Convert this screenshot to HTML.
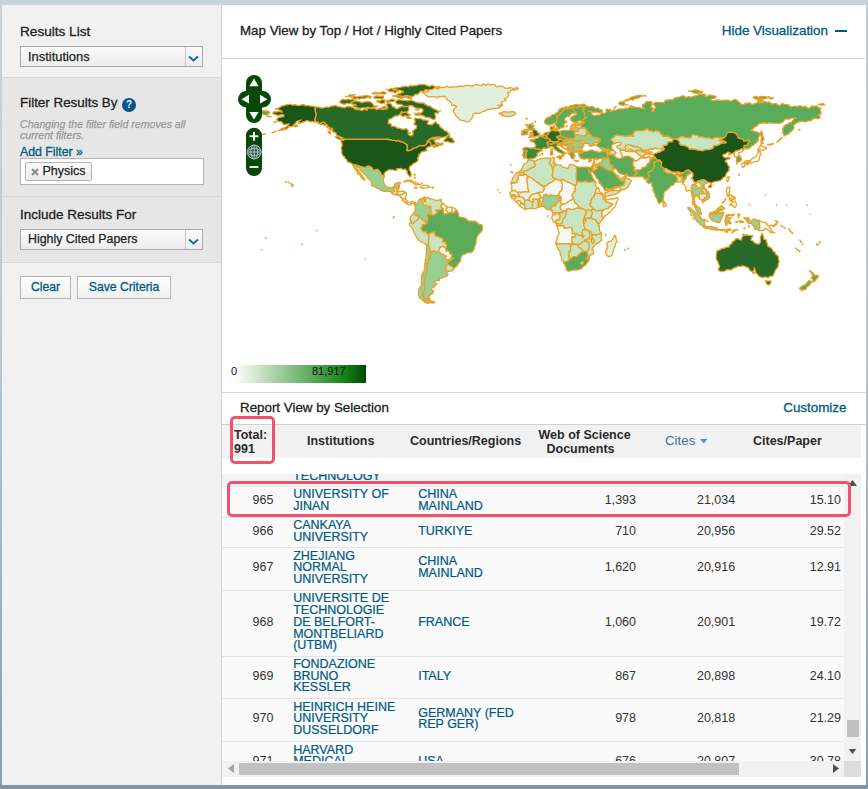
<!DOCTYPE html>
<html>
<head>
<meta charset="utf-8">
<title>Essential Science Indicators</title>
<style>
*{box-sizing:border-box;margin:0;padding:0}
html,body{width:868px;height:789px;overflow:hidden}
body{background:#c9d3da;font-family:"Liberation Sans",Arial,sans-serif;color:#222;position:relative;font-size:13px}
.abs{position:absolute}
#bottom{left:0;top:784.5px;width:868px;height:5px;background:#8194a3}
#side{left:2px;top:5px;width:219px;height:779.5px;background:#f1f1f1}
#sec2{left:2px;top:77px;width:219px;height:186px;background:#e6e6e6;border-top:1px solid #d6d6d6;border-bottom:1px solid #d6d6d6}
#sec2b{left:2px;top:196px;width:219px;height:1px;background:#d4d4d4}
.h{font-size:13.5px;color:#222;-webkit-text-stroke:0.3px #222;white-space:nowrap}
.sel{height:21px;border:1px solid #a9a9a9;background:linear-gradient(#fbfbfb,#ececec);font-size:12.9px;line-height:19px;padding-left:7px;color:#222;-webkit-text-stroke:0.25px #222;white-space:nowrap}
.sel i{position:absolute;right:0;top:0;width:17px;height:19px;border-left:1px solid #c4c4c4}
.btn{height:23px;border:1px solid #b5b5b5;background:linear-gradient(#fdfdfd,#f0f0f0);font-size:12.2px;line-height:21px;text-align:center;color:#005a84;-webkit-text-stroke:0.3px #005a84;white-space:nowrap}
#main{left:222px;top:5px;width:644px;height:779.5px;background:#fff}
.link{color:#005a84;-webkit-text-stroke:0.3px #005a84;font-size:12.3px;white-space:nowrap}
</style>
</head>
<body>
<div class="abs" id="bottom"></div>
<div class="abs" id="side"></div>
<div class="abs" id="sec2"></div>
<div class="abs" id="sec2b"></div>

<div class="abs h" style="left:20px;top:24.3px;font-size:13.6px">Results List</div>
<div class="abs sel" style="left:20px;top:46px;width:183px">Institutions<i></i>
<svg class="abs" style="right:3px;top:8px" width="11" height="8" viewBox="0 0 11 8"><path d="M1 1.5 L5.5 5.5 L10 1.5" fill="none" stroke="#1a6a96" stroke-width="2"/></svg></div>

<div class="abs h" style="left:20px;top:95.3px;font-size:13.4px">Filter Results By</div>
<div class="abs" style="left:122px;top:97.5px;width:14px;height:14px;border-radius:7px;background:#00558a;color:#fff;font-size:10px;font-weight:bold;text-align:center;line-height:14px">?</div>
<div class="abs" style="left:20px;top:119px;font-size:10.6px;line-height:11px;color:#999;-webkit-text-stroke:0.25px #999;font-style:italic;width:200px">Changing the filter field removes all<br>current filters.</div>
<div class="abs link" style="left:20px;top:144.5px">Add Filter »</div>
<div class="abs" style="left:20px;top:158px;width:184px;height:27px;background:#fff;border:1px solid #b3b3b3"></div>
<div class="abs" style="left:25px;top:162px;width:67px;height:19px;border:1px solid #b3b3b3;border-radius:2px;background:linear-gradient(#fafafa,#ebebeb);font-size:12.5px;line-height:17px;color:#222;-webkit-text-stroke:0.25px #222;padding-left:16.5px">Physics<svg class="abs" style="left:5px;top:5px" width="8" height="8" viewBox="0 0 8 8"><path d="M1 1l6 6M7 1l-6 6" stroke="#8a8a8a" stroke-width="2" fill="none"/></svg></div>

<div class="abs h" style="left:20px;top:207.3px">Include Results For</div>
<div class="abs sel" style="left:20px;top:229px;width:183px;font-size:12.4px">Highly Cited Papers<i></i>
<svg class="abs" style="right:3px;top:8px" width="11" height="8" viewBox="0 0 11 8"><path d="M1 1.5 L5.5 5.5 L10 1.5" fill="none" stroke="#1a6a96" stroke-width="2"/></svg></div>

<div class="abs btn" style="left:20px;top:276px;width:51px">Clear</div>
<div class="abs btn" style="left:77px;top:276px;width:94px">Save Criteria</div>

<div class="abs" id="main"></div>
<!--MAINSTART-->
<style>
#mainL{left:221px;top:5px;width:1px;height:780px;background:#d0d0d0}
#mainR{left:866px;top:0;width:2px;height:785px;background:linear-gradient(#c3cdd5,#b9c4cd 45%,#8a9cab)}
#edgeL{left:0;top:0;width:2px;height:785px;background:linear-gradient(#c9d3da,#bcc7d0 45%,#8a9cab)}
.hl{background:#d4d4d4;height:1px}
.bt{font-size:13.35px;color:#222;-webkit-text-stroke:0.3px #222;white-space:nowrap}
.th{font-size:12.5px;font-weight:bold;line-height:13.5px;color:#2a2a2a;white-space:nowrap;text-align:center}
#tb{left:222px;top:474px;width:622px;height:287px;overflow:hidden;background:#fff}
.r{position:absolute;left:0;width:622px;border-bottom:1px solid #e4e4e4;background:#fafafa}
.r.g{background:#fafafa}
.r span{position:absolute;font-size:12.5px;line-height:11.7px;white-space:nowrap}
.n{left:30.6px;color:#333}
.i,.c{color:#005a84;-webkit-text-stroke:0.22px #005a84}
.i{left:71.2px}.c{left:196.2px}
.d{color:#333;text-align:right}
.d1{right:208px}.d2{right:108.8px}.d3{right:3px}
.red{border:3px solid #f0516b;border-radius:5px}
</style>
<div class="abs" id="edgeL"></div><div class="abs" id="mainL"></div><div class="abs" id="mainR"></div>
<div class="abs bt" style="left:240px;top:23.2px">Map View by Top / Hot / Highly Cited Papers</div>
<div class="abs link" style="right:40px;top:23.2px;font-size:13.4px">Hide Visualization</div>
<div class="abs" style="left:835px;top:29.7px;width:12px;height:2.4px;background:#005a84"></div>
<div class="abs hl" style="left:222px;top:58px;width:643px"></div>
<!--MAPSTART--><svg class="abs" style="left:222px;top:58px" width="644" height="334" viewBox="0 0 644 334"><g stroke="#eda024" stroke-width="1.3" stroke-linejoin="round">
<path fill="#1b5618" d="M119.0,82.2 121.7,82.3 121.4,81.2 165.5,81.2 165.5,80.6 166.4,81.7 168.5,81.7 170.5,82.3 172.5,82.3 174.4,82.8 176.2,82.3 177.9,83.6 180.1,83.5 181.8,84.5 182.3,85.2 183.9,85.9 185.5,87.1 185.1,88.9 185.6,90.7 184.5,92.1 185.5,92.7 187.4,92.5 189.2,91.8 191.0,91.0 190.8,90.2 192.6,89.9 194.4,89.7 195.2,88.8 197.7,87.5 200.3,87.7 202.8,87.5 203.9,86.9 204.7,85.6 206.4,83.7 207.8,83.9 208.6,84.4 208.6,86.4 209.9,87.7 207.5,88.6 205.1,89.4 204.0,91.1 205.1,92.6 203.3,93.0 201.2,93.3 199.3,94.0 198.8,94.6 197.4,97.0 196.5,96.3 197.1,97.9 195.7,100.1 196.2,102.3 194.9,103.7 192.5,105.0 190.5,106.3 189.4,107.6 187.8,108.3 187.2,110.5 187.6,112.4 188.6,114.0 189.2,116.7 188.8,118.7 187.7,118.7 186.6,117.1 185.1,114.8 185.0,112.7 183.1,111.0 181.1,111.6 179.2,110.5 176.8,110.7 174.4,110.8 174.9,112.6 172.9,112.4 170.8,111.8 169.2,111.9 167.7,111.6 166.1,112.3 163.6,113.7 162.2,115.4 162.3,117.6 160.7,117.6 159.3,116.8 158.7,115.1 157.8,113.8 156.8,112.6 155.5,111.5 153.8,111.6 152.9,112.7 150.8,111.8 150.0,110.0 147.7,108.3 145.0,108.3 145.0,109.1 142.7,109.5 140.4,109.1 138.5,108.5 136.5,107.9 134.6,107.2 132.8,106.9 131.0,107.2 130.7,106.1 128.9,105.2 127.7,104.5 125.5,103.9 124.9,102.1 123.4,100.8 122.5,98.9 121.1,98.0 120.4,96.5 119.6,94.9 119.9,92.2 119.3,91.0 119.4,89.3 120.1,87.8 120.1,85.5 119.1,84.0ZM93.3,48.8 93.2,51.2 93.4,53.7 94.4,56.1 93.8,58.5 93.1,61.0 93.3,63.4 95.7,63.9 96.9,65.5 98.8,65.5 100.1,64.2 102.0,64.2 103.1,65.8 105.0,66.8 105.9,68.6 108.1,69.9 110.6,70.4 110.6,71.8 108.0,71.8 106.9,70.2 105.1,69.4 104.0,67.7 102.0,67.1 99.6,66.3 97.2,65.9 95.2,64.5 93.5,64.0 91.8,63.9 90.2,63.5 88.6,63.9 86.7,63.1 84.7,62.6 83.1,63.4 81.5,63.9 79.1,65.0 76.3,65.2 77.6,62.6 79.1,62.0 77.2,62.7 75.2,63.1 73.6,65.0 72.1,66.3 71.0,68.2 68.9,68.6 66.9,68.6 65.8,70.2 64.3,71.1 62.6,71.1 60.7,72.1 58.7,72.2 55.8,72.6 57.4,72.3 58.7,71.3 60.1,70.4 61.8,70.2 63.8,69.1 65.8,67.8 67.3,65.9 65.0,66.1 62.7,66.7 60.6,65.9 60.2,64.2 58.4,63.5 56.3,63.6 54.7,61.5 55.8,59.8 57.9,59.0 59.9,59.0 61.8,58.4 61.8,56.8 60.2,56.8 58.7,56.8 56.1,57.4 53.5,56.7 51.9,56.2 50.6,55.1 52.0,53.6 53.9,54.1 55.6,53.6 57.4,53.5 60.2,54.1 59.5,52.9 57.1,51.8 55.1,51.2 53.2,50.8 55.1,50.4 57.1,49.9 59.5,48.2 61.9,47.6 64.2,46.9 66.5,46.6 68.8,46.1 70.7,47.2 72.9,46.7 75.2,47.4 77.6,47.5 79.7,46.8 81.8,46.7 83.9,47.8 86.3,47.4 88.6,48.2 91.0,48.2ZM63.4,123.8 64.3,123.4 64.5,123.9ZM66.2,124.5 67.0,124.4 66.9,125.0ZM68.8,125.3 69.7,125.6 69.1,126.0ZM69.7,126.6 71.3,127.2 70.3,128.6 69.7,127.7ZM44.8,58.5 49.2,58.7 46.9,58.1ZM72.1,67.8 73.7,67.1 75.5,67.1 75.2,68.3 72.9,68.9ZM52.4,74.1 53.9,73.4 50.0,74.8ZM40.6,76.3 43.7,75.9 38.2,76.8ZM53.2,63.4 54.4,63.7 51.9,64.1Z"/>
<path fill="#286a28" d="M93.3,48.8 94.9,49.1 96.5,48.9 98.7,50.0 101.2,49.9 102.9,49.7 104.4,48.9 106.6,49.4 108.6,48.4 110.6,48.0 112.2,47.6 113.8,47.4 116.0,48.7 118.5,48.9 120.7,49.3 122.8,49.7 124.8,48.5 127.0,48.5 129.1,48.9 131.1,49.7 133.3,51.1 135.9,50.8 134.3,51.6 136.9,51.3 139.5,52.5 142.1,51.5 143.8,51.3 145.3,52.1 145.3,50.4 147.7,50.3 150.0,50.5 152.6,50.1 154.8,51.6 156.8,50.6 158.9,50.9 161.0,51.6 162.6,50.5 163.4,51.0 165.3,50.8 165.8,48.9 164.2,46.6 166.6,45.0 168.2,45.7 169.7,46.6 170.5,48.9 172.5,48.8 173.6,50.5 175.4,50.7 176.8,49.7 178.7,48.9 180.7,48.5 183.5,48.3 186.2,48.5 187.0,50.5 186.2,52.9 185.0,54.3 183.1,54.0 181.1,54.4 179.2,53.7 179.9,55.2 178.6,56.5 176.8,56.8 175.5,58.2 173.6,57.6 171.3,59.2 168.9,60.8 167.0,61.2 166.6,63.1 166.1,65.5 168.9,65.9 169.7,68.6 171.7,68.1 173.6,68.6 175.3,70.2 177.6,70.2 179.5,71.0 181.5,71.3 183.7,70.7 185.8,71.6 186.2,73.3 185.9,74.9 186.6,76.4 187.8,77.3 189.9,77.8 191.3,75.7 190.6,74.2 191.0,72.6 192.6,71.4 194.1,70.2 194.9,67.8 193.2,67.0 191.8,65.8 193.3,63.9 192.7,62.1 192.5,60.3 194.6,60.3 196.7,60.6 198.8,60.3 200.5,61.8 202.8,62.0 204.4,62.2 205.9,62.3 206.4,64.1 205.1,65.5 206.5,66.6 208.3,66.6 210.2,66.8 211.4,65.5 212.6,64.4 213.8,63.4 214.8,65.5 217.0,66.3 217.7,67.9 218.5,69.4 220.3,70.4 221.7,71.8 223.1,72.8 224.8,73.4 225.9,74.9 227.5,75.7 225.6,77.4 223.4,78.7 220.9,79.3 218.8,79.5 216.7,79.0 214.6,79.2 212.6,79.5 210.7,79.3 209.3,80.6 207.5,81.2 206.1,82.5 204.7,83.6 207.0,82.2 208.7,81.1 210.7,80.9 212.4,81.1 214.1,81.5 212.2,82.8 213.3,84.4 213.8,85.6 216.2,86.3 218.5,86.4 220.1,84.4 221.2,85.9 219.3,87.2 217.3,87.3 215.4,88.2 213.5,88.8 211.8,89.7 211.1,88.3 212.5,87.6 213.8,86.7 211.4,87.2 209.9,87.7 208.6,86.4 208.6,84.4 207.8,83.9 206.4,83.7 204.7,85.6 203.9,86.9 202.8,87.5 200.3,87.7 197.7,87.5 195.2,88.8 194.4,89.7 192.6,89.9 190.8,90.2 191.0,91.0 189.2,91.8 187.4,92.5 185.5,92.7 184.5,92.1 185.6,90.7 185.1,88.9 185.5,87.1 183.9,85.9 182.3,85.2 181.8,84.5 180.1,83.5 177.9,83.6 176.2,82.3 174.4,82.8 172.5,82.3 170.5,82.3 168.5,81.7 166.4,81.7 165.5,80.6 165.5,81.2 121.4,81.2 121.7,82.3 120.1,82.0 118.5,81.7 120.9,80.4 118.5,78.9 116.6,78.0 114.6,77.3 113.8,74.9 111.8,74.2 110.2,72.9 110.6,71.8 110.6,70.4 108.1,69.9 105.9,68.6 105.0,66.8 103.1,65.8 102.0,64.2 100.1,64.2 98.8,65.5 96.9,65.5 95.7,63.9 93.3,63.4 93.1,61.0 93.8,58.5 94.4,56.1 93.4,53.7 93.2,51.2 93.3,48.8ZM213.0,61.1 210.5,61.3 208.3,60.0 206.0,59.5 203.6,59.5 201.4,57.9 198.8,56.8 196.1,57.0 193.3,57.1 192.5,55.2 194.6,55.7 196.7,54.9 198.8,55.2 200.4,54.0 201.2,52.1 199.6,50.4 197.3,50.5 195.0,50.2 192.8,49.7 191.0,48.2 188.6,47.4 186.2,48.2 183.9,48.6 181.5,48.2 179.5,46.3 176.8,46.3 174.8,45.8 173.6,44.2 174.4,42.6 176.7,41.7 179.1,42.1 181.5,42.2 183.6,42.4 185.7,42.9 187.8,42.3 190.4,42.4 192.5,43.7 195.3,44.6 198.1,45.0 201.1,44.9 203.6,46.6 205.8,47.9 208.3,48.2 209.9,49.7 212.2,51.0 214.6,52.1 216.4,53.3 218.5,53.2 216.9,53.7 216.2,55.2 214.6,55.1 213.0,54.8 212.9,56.7 213.8,58.4ZM131.1,48.2 132.6,48.9 134.3,49.3 135.8,49.9 137.4,50.4 139.5,50.1 141.6,49.7 143.7,50.2 145.8,49.1 148.0,50.2 150.0,49.7 152.3,49.0 154.8,48.9 155.5,48.2 153.5,48.2 151.6,47.4 150.0,45.0 147.8,43.8 145.3,43.4 143.8,43.9 142.1,43.9 140.0,44.6 137.9,43.8 135.9,43.4 133.6,42.8 131.6,43.3 129.5,44.2 129.5,46.1 132.0,46.2 134.3,47.2 132.5,47.1ZM118.5,45.0 120.8,46.1 123.2,46.1 125.1,45.0 127.2,45.8 129.2,44.7 131.1,43.4 132.7,41.9 130.7,40.7 128.5,41.9 126.4,41.2 124.3,41.8 122.2,41.6 120.1,41.5 118.9,42.4 117.7,43.4ZM173.6,37.9 176.3,37.8 178.9,38.7 181.5,38.2 184.2,37.3 186.8,37.9 189.4,38.4 191.7,38.1 193.3,36.3 195.7,36.5 197.3,34.8 198.8,33.2 201.4,33.6 203.4,31.6 206.0,32.2 208.3,31.5 210.6,31.9 212.5,30.4 214.6,30.0 216.4,29.8 217.8,28.5 215.2,28.6 212.7,28.6 210.2,27.1 207.6,28.6 205.1,27.5 202.6,26.7 200.1,26.7 197.6,26.5 195.1,27.5 192.5,27.5 190.4,28.1 188.1,27.5 186.0,28.9 183.7,28.2 181.5,28.5 178.9,29.2 176.3,29.6 173.6,30.0 171.9,30.4 170.5,31.6 173.1,32.1 175.7,32.2 178.4,32.4 180.0,33.1 181.5,34.0 179.7,34.3 178.4,35.6 176.5,35.4 175.2,36.7ZM164.2,31.3 166.7,31.7 168.9,30.4 171.4,30.7 173.6,31.6 175.3,32.2 176.8,33.2 174.7,33.3 173.6,35.1 171.7,34.1 169.6,33.3 167.4,33.7 165.9,32.2ZM170.5,37.9 173.0,38.3 175.2,39.5 177.3,39.8 179.4,40.3 181.5,39.3 184.3,39.3 186.7,40.7 189.4,40.9 189.4,39.3 187.5,39.6 186.2,38.1 183.9,38.4 181.5,38.6 179.2,38.0 176.8,37.8 174.7,37.1 172.6,37.8ZM178.4,55.2 180.0,55.0 181.5,54.5 183.1,53.8 184.7,54.5 186.4,56.1 188.6,56.8 186.2,58.1 184.6,58.0 183.1,57.6 181.6,58.5 179.9,58.1 178.4,56.8ZM131.1,40.0 133.1,41.0 135.3,40.6 137.4,41.1 139.7,40.1 142.1,40.6 144.2,39.6 146.3,39.5 148.4,40.3 149.2,38.7 146.5,38.0 143.7,37.6 141.6,38.0 139.6,38.5 137.4,38.2 135.3,39.1 133.2,38.7 131.1,38.2ZM154.8,43.7 157.2,44.5 159.5,45.8 161.0,45.1 162.6,45.0 163.4,42.6 161.5,41.8 159.5,41.9 157.6,43.1 155.5,42.2ZM165.0,45.0 166.8,43.8 168.9,43.7 171.2,43.7 172.9,42.2 171.0,41.2 168.9,41.5 167.0,42.4 165.0,42.2ZM151.6,39.8 153.7,40.4 155.8,40.4 157.9,40.3 160.1,40.9 161.8,39.5 161.0,37.8 158.4,38.4 155.8,37.9 153.2,38.1ZM123.2,38.7 125.4,38.3 127.5,38.5 129.5,39.2 130.9,37.0 133.5,36.7 130.7,37.6 128.0,36.7 125.9,38.3ZM150.0,35.9 152.6,35.9 155.3,35.6 157.9,35.9 160.0,35.8 162.2,36.2 164.2,35.1 162.0,33.8 159.5,34.0 156.9,35.1 154.2,34.5 151.6,34.3ZM158.7,49.7 160.5,51.0 162.6,50.5 165.0,49.7 162.6,48.3 160.7,49.2ZM222.0,83.4 223.8,83.8 225.6,83.4 228.0,84.5 230.0,84.6 231.9,84.8 232.4,83.3 230.7,81.9 231.1,80.8 229.4,80.0 227.5,79.7 228.0,77.3 225.6,78.1 224.0,80.4 222.0,82.3ZM113.3,78.4 115.6,78.3 117.7,79.2 119.1,80.9 120.9,82.0 118.5,81.9 116.5,81.0 114.6,80.0ZM105.9,73.2 108.0,73.4 108.8,76.2 106.7,74.9ZM213.8,79.8 218.1,80.9 215.4,80.6ZM214.1,84.7 217.8,85.3 216.2,85.9ZM184.7,59.5 186.2,58.5 187.8,59.5 189.4,60.4 187.4,60.1 185.5,60.4ZM186.2,74.9 188.6,74.8 187.8,75.4ZM193.3,51.6 196.5,52.1 195.7,50.8Z"/>
<path fill="#e0f0dc" d="M200.4,34.8 202.2,33.4 204.7,34.1 206.5,32.8 208.3,31.6 210.7,31.3 212.8,29.7 215.6,31.1 217.8,29.6 220.1,29.3 222.5,29.3 224.8,28.2 227.2,29.5 229.6,29.0 231.9,28.9 234.3,28.8 236.6,28.5 238.9,28.0 241.2,28.6 243.4,27.3 245.6,27.3 247.9,27.6 250.2,28.3 252.4,27.0 254.6,26.3 256.9,27.1 259.2,27.6 261.4,25.9 263.7,27.4 265.9,26.1 268.1,26.9 270.3,26.7 272.5,26.6 274.3,28.5 276.4,28.7 278.7,27.9 280.8,28.5 282.6,29.8 284.7,30.3 287.0,30.0 289.4,29.7 291.7,31.3 294.2,29.6 296.5,30.4 294.7,31.6 292.7,32.0 290.6,32.1 288.6,32.4 287.7,34.4 285.5,34.8 286.6,36.2 286.3,37.9 284.8,39.9 282.3,40.3 283.9,42.6 281.6,43.5 279.2,44.2 279.5,46.0 280.8,47.4 278.4,47.4 276.0,47.7 277.8,46.9 279.2,48.3 277.1,50.0 274.4,50.5 272.4,51.0 270.2,50.4 268.1,51.3 265.5,51.2 263.4,52.9 260.9,53.5 258.7,54.8 256.0,55.4 253.2,55.2 251.2,56.2 250.8,58.4 249.9,60.2 248.5,61.5 246.9,63.9 244.5,63.6 242.2,62.9 239.8,62.3 237.7,61.8 236.6,60.0 234.7,58.8 233.5,56.8 232.4,55.1 231.1,53.7 231.9,51.3 233.1,49.5 235.1,48.9 232.6,47.2 229.6,47.4 229.6,45.0 228.3,43.9 227.2,42.6 224.9,41.8 224.0,39.5 222.1,38.1 219.9,38.6 217.8,38.4 215.2,39.6 212.5,38.6 209.9,38.7 207.5,39.2 205.5,38.2 203.6,37.1 202.4,35.4Z"/>
<path fill="#c7e5c1" d="M276.8,55.2 279.0,55.1 280.8,53.8 282.9,53.7 284.9,54.2 287.0,54.1 289.5,53.4 292.1,54.0 294.0,55.7 291.8,57.1 289.1,58.2 286.3,58.5 284.2,58.5 282.3,57.9 279.6,57.8 280.8,56.3 279.2,56.1 277.6,56.2Z"/>
<path fill="#98d094" d="M131.0,107.2 132.8,106.9 134.6,107.2 136.5,107.9 138.5,108.5 140.4,109.1 142.7,109.5 145.0,109.1 145.0,108.3 147.7,108.3 150.0,110.0 150.8,111.8 152.9,112.7 153.8,111.6 155.5,111.5 156.8,112.6 157.8,113.8 158.7,115.1 159.3,116.8 160.7,117.6 162.3,117.6 162.3,119.2 161.4,120.6 161.4,123.3 162.3,126.0 163.7,128.0 165.8,129.1 167.4,129.7 168.9,129.3 170.5,129.1 172.1,128.2 172.9,125.6 174.4,125.0 176.0,124.5 178.4,124.5 177.6,126.9 177.3,129.6 176.3,129.4 174.9,130.2 172.1,130.2 171.6,131.5 172.9,133.0 171.4,134.0 170.2,135.4 169.0,133.9 167.4,133.2 165.0,133.5 163.4,133.2 161.8,133.4 160.0,132.7 158.2,132.1 156.7,130.7 154.8,130.2 153.3,129.1 151.6,128.6 149.2,126.9 149.6,124.5 148.8,123.0 147.7,121.7 145.9,120.4 144.5,118.6 142.9,116.3 141.5,115.6 140.6,114.3 139.3,113.2 138.2,111.9 137.1,109.3 134.6,108.3 134.7,110.4 135.8,111.4 136.6,112.7 138.2,115.1 139.2,116.8 140.6,118.2 142.1,120.6 142.9,122.0 141.7,121.9 140.3,120.7 139.0,119.3 138.2,117.1 136.5,116.3 135.1,115.1 135.9,113.5 134.1,112.7 133.0,111.2 131.6,108.8Z"/>
<path fill="#e0f0dc" d="M170.2,135.4 171.4,134.0 172.9,133.0 171.6,131.5 172.1,130.2 174.9,130.2 174.8,131.8 174.9,133.4 176.3,133.7 174.9,134.9 174.6,135.7 173.5,136.7 171.4,136.5Z"/>
<path fill="#f4f8f2" d="M174.9,130.2 176.3,129.4 176.6,130.8 175.4,133.4 174.9,133.4 174.8,131.8Z"/>
<path fill="#e0f0dc" d="M174.9,134.9 176.3,133.7 177.6,133.5 179.9,133.2 182.3,133.5 184.4,134.8 181.8,135.1 180.4,136.5 178.8,136.7 177.9,137.9 177.1,137.3 176.0,136.5 174.6,135.7Z"/>
<path fill="#f4f8f2" d="M173.5,136.7 174.6,135.7 176.0,136.5 177.1,137.3 177.0,137.6 174.8,137.1Z"/>
<path fill="#f4f8f2" d="M177.9,137.9 178.8,136.7 180.4,136.5 181.8,135.1 184.4,134.8 184.3,136.4 183.9,137.9 183.4,139.5 183.6,141.1 182.0,140.9 180.4,140.9 179.1,139.5Z"/>
<path fill="#c7e5c1" d="M180.4,140.9 182.0,140.9 183.6,141.1 185.3,143.3 184.8,145.6 183.6,144.9 182.0,143.3 180.3,142.7Z"/>
<path fill="#e0f0dc" d="M184.8,145.6 185.3,143.3 187.8,144.5 190.2,143.3 191.9,144.0 193.5,144.7 192.7,147.1 191.9,145.2 189.4,145.3 188.8,146.9 186.7,146.6Z"/>
<path fill="#ffffff" d="M181.7,123.9 183.2,123.1 184.7,122.2 186.7,122.3 188.6,122.0 190.8,123.6 193.3,124.2 195.0,124.8 196.5,125.8 198.5,126.6 195.7,126.5 193.0,127.1 193.8,126.0 191.8,125.3 190.2,124.5 188.6,123.8 187.1,123.0 185.5,123.0 183.6,123.6Z"/>
<path fill="#ffffff" d="M198.2,129.4 199.0,128.0 200.4,127.1 202.5,127.2 205.3,127.4 207.7,129.1 205.1,129.6 202.8,130.5 201.2,129.7 199.7,129.8Z"/>
<path fill="#ffffff" d="M192.1,129.4 195.2,129.7 193.8,130.4Z"/>
<path fill="#ffffff" d="M209.6,129.3 211.9,129.4 210.7,130.1Z"/>
<path fill="#ffffff" d="M191.8,116.3 193.7,116.7 192.5,117.0ZM192.5,119.0 193.2,120.3 192.2,120.0ZM199.5,125.3 200.4,124.9 200.1,125.5Z"/>
<path fill="#ffffff" d="M218.1,141.5 219.5,141.4 219.0,142.5Z"/>
<path fill="#98d094" d="M193.5,144.7 194.4,145.8 195.7,144.8 196.3,143.4 197.3,141.4 198.8,140.8 201.5,139.7 203.1,138.9 203.1,139.8 203.1,139.8 201.2,140.9 200.4,143.4 201.2,145.8 202.0,147.1 204.8,147.4 205.9,148.8 207.5,148.2 209.1,148.6 208.6,151.3 209.4,153.0 208.6,154.0 209.9,156.5 209.9,156.5 207.6,156.5 205.5,155.7 206.4,156.8 205.1,157.5 205.1,158.7 206.1,160.1 205.6,162.6 205.3,165.0 205.3,165.0 204.0,164.4 202.5,163.0 200.6,162.3 198.8,160.0 196.8,158.6 196.8,158.6 195.2,157.8 193.3,157.3 191.3,156.2 191.3,156.2 191.6,154.5 193.3,152.4 193.3,149.7 193.5,147.7 192.7,147.1Z"/>
<path fill="#c7e5c1" d="M203.1,139.8 202.2,140.8 202.8,141.4 202.3,143.4 203.6,143.8 203.3,141.4 204.8,140.3 205.5,139.2 207.7,140.8 209.7,140.8 211.4,141.7 213.8,142.3 215.9,142.5 217.8,141.5 218.1,142.7 219.3,143.4 219.6,145.0 221.2,145.3 221.2,145.3 220.0,146.1 220.4,147.4 219.2,147.8 218.7,149.1 219.8,150.2 219.8,150.2 219.3,151.3 217.0,151.9 216.5,152.6 213.8,151.9 214.3,152.4 215.5,154.8 214.6,155.4 212.2,156.8 211.0,157.1 209.9,156.5 209.9,156.5 208.6,154.0 209.4,153.0 208.6,151.3 209.1,148.6 207.5,148.2 205.9,148.8 204.8,147.4 202.0,147.1 201.2,145.8 200.4,143.4 201.2,140.9 203.1,139.8Z"/>
<path fill="#f4f8f2" d="M221.2,145.3 223.3,147.4 225.3,149.1 225.3,149.1 224.5,150.5 224.0,152.1 225.2,153.2 226.4,155.4 226.4,155.4 224.0,156.0 222.5,156.4 221.2,154.8 221.5,152.9 221.2,151.5 220.9,150.5 219.8,150.2 219.8,150.2 218.7,149.1 219.2,147.8 220.4,147.4 220.0,146.1 221.2,145.3Z"/>
<path fill="#f4f8f2" d="M225.3,149.1 228.0,149.1 230.3,149.3 230.3,149.3 229.7,151.0 230.0,152.9 229.6,154.8 229.6,154.8 227.4,154.5 226.4,155.4 226.4,155.4 225.2,153.2 224.0,152.1 224.5,150.5 225.3,149.1Z"/>
<path fill="#f4f8f2" d="M230.3,149.3 232.7,150.5 234.0,151.8 234.0,151.8 233.1,153.4 232.1,154.9 229.6,154.8 229.6,154.8 230.0,152.9 229.7,151.0 230.3,149.3Z"/>
<path fill="#5aab5a" d="M234.0,151.8 235.1,152.4 235.5,154.2 236.6,155.6 236.6,158.4 239.0,159.5 240.6,159.3 242.6,160.1 244.5,160.9 245.6,162.7 247.8,163.2 250.0,163.0 251.6,163.4 253.2,163.1 254.9,164.4 256.7,165.8 258.1,166.5 259.8,166.7 260.3,168.2 260.6,169.7 260.0,172.6 258.6,174.2 257.1,175.7 256.0,177.3 254.8,178.9 254.6,180.5 254.0,182.0 254.2,184.3 253.7,186.4 252.9,188.1 252.4,189.9 251.9,191.6 250.8,193.1 249.2,194.6 247.3,194.7 245.3,194.9 243.7,195.5 242.2,196.4 240.5,197.1 239.3,198.6 238.9,200.1 238.7,201.7 238.2,203.6 236.8,204.8 235.9,206.4 234.8,208.2 233.0,209.3 231.3,211.5 231.3,211.5 231.3,209.9 229.6,208.3 227.2,207.1 224.7,206.0 224.7,206.0 226.1,204.3 227.7,202.8 228.9,201.5 230.7,201.1 230.8,199.7 229.4,198.6 229.4,198.6 229.9,196.2 227.8,195.9 227.2,193.5 225.8,192.9 224.2,193.2 223.5,191.8 223.7,190.2 223.7,190.2 224.0,189.6 224.8,186.8 223.6,185.6 223.4,184.1 220.6,184.1 220.8,182.0 220.1,180.1 217.8,179.7 216.1,178.4 214.0,178.1 212.6,176.8 212.6,173.8 210.4,174.6 208.3,175.3 205.8,175.6 205.8,175.6 204.2,175.7 204.2,173.4 201.7,174.2 200.4,172.9 199.6,171.5 198.8,170.1 200.1,168.6 200.7,166.4 203.2,166.2 205.3,165.0 205.3,165.0 205.6,162.6 206.1,160.1 205.1,158.7 205.1,157.5 206.4,156.8 205.5,155.7 207.6,156.5 209.9,156.5 209.9,156.5 211.0,157.1 212.2,156.8 214.6,155.4 215.5,154.8 214.3,152.4 213.8,151.9 216.5,152.6 217.0,151.9 219.3,151.3 219.8,150.2 219.8,150.2 220.9,150.5 221.2,151.5 221.5,152.9 221.2,154.8 222.5,156.4 224.0,156.0 226.4,155.4 226.4,155.4 227.4,154.5 229.6,154.8 229.6,154.8 232.1,154.9 233.1,153.4 234.0,151.8Z"/>
<path fill="#c7e5c1" d="M231.3,211.5 229.6,213.1 226.9,213.4 225.1,213.0 223.6,211.9 223.6,211.9 223.7,209.6 223.7,207.6 224.7,206.0 224.7,206.0 227.2,207.1 229.6,208.3 231.3,209.9 231.3,211.5Z"/>
<path fill="#98d094" d="M223.6,211.9 224.5,213.5 225.3,215.1 226.1,216.4 224.5,218.6 222.6,218.8 220.9,219.7 219.2,220.2 217.4,219.8 217.3,222.7 215.1,222.4 213.0,223.0 213.0,225.3 215.1,225.7 213.9,227.1 212.6,228.5 211.0,229.6 209.4,230.5 209.1,232.0 211.8,233.2 210.8,235.1 209.1,236.4 208.2,237.7 206.7,238.4 207.7,240.8 207.7,240.8 205.1,240.3 203.3,240.4 201.5,239.8 200.4,237.1 201.2,235.6 201.5,234.0 202.2,232.5 202.8,230.9 202.9,229.3 202.6,227.7 202.2,226.2 202.3,224.6 202.8,222.6 202.8,220.6 203.6,218.7 203.6,216.7 203.5,214.9 204.5,213.5 205.1,210.7 204.9,209.0 205.1,207.2 205.4,205.3 205.6,203.3 206.2,201.8 207.5,200.9 207.9,199.0 207.8,197.0 208.7,195.6 209.6,194.3 209.6,194.3 211.0,192.7 212.7,193.2 214.1,194.3 216.6,193.4 216.6,193.4 218.1,194.5 219.3,195.9 221.0,196.3 222.5,197.0 224.5,198.2 223.5,199.6 223.1,201.2 224.8,201.4 227.5,201.6 229.1,200.5 229.4,198.6 229.4,198.6 230.8,199.7 230.7,201.1 228.9,201.5 227.7,202.8 226.1,204.3 224.7,206.0 224.7,206.0 223.7,207.6 223.7,209.6 223.6,211.9ZM207.4,241.4 208.8,243.0 211.1,243.3 212.7,244.6 210.7,245.2 209.1,244.4 207.4,244.9 208.0,243.1Z"/>
<path fill="#98d094" d="M207.7,240.8 206.2,242.2 204.4,242.8 202.4,242.5 200.4,242.7 199.6,241.1 198.1,240.3 197.1,238.9 196.8,237.1 196.3,235.6 196.5,234.0 196.5,231.6 197.6,230.0 198.8,228.5 199.5,226.6 199.2,224.6 199.5,223.0 199.3,221.4 199.8,219.5 199.6,217.5 200.2,215.8 201.1,214.3 202.2,212.5 202.6,210.4 202.8,208.0 202.8,205.6 203.4,204.1 203.1,202.5 203.9,200.6 204.4,198.6 204.0,195.8 204.7,193.1 204.5,191.1 204.8,189.1 204.5,187.2 204.5,187.2 205.9,186.0 205.9,186.0 206.7,188.3 207.5,189.1 207.7,190.7 208.0,192.3 209.6,194.3 209.6,194.3 208.7,195.6 207.8,197.0 207.9,199.0 207.5,200.9 206.2,201.8 205.6,203.3 205.4,205.3 205.1,207.2 204.9,209.0 205.1,210.7 204.5,213.5 203.5,214.9 203.6,216.7 203.6,218.7 202.8,220.6 202.8,222.6 202.3,224.6 202.2,226.2 202.6,227.7 202.9,229.3 202.8,230.9 202.2,232.5 201.5,234.0 201.2,235.6 200.4,237.1 201.5,239.8 203.3,240.4 205.1,240.3 207.7,240.8ZM207.4,241.4 208.0,243.1 207.4,244.9 205.1,245.5 203.7,244.5 202.0,244.2 204.4,243.1 205.5,241.6Z"/>
<path fill="#c7e5c1" d="M205.8,175.6 207.2,178.1 206.6,179.6 206.7,181.2 206.3,182.5 206.7,184.4 205.9,186.0 205.9,186.0 206.7,188.3 207.5,189.1 207.7,190.7 208.0,192.3 209.6,194.3 209.6,194.3 211.0,192.7 212.7,193.2 214.1,194.3 216.6,193.4 216.6,193.4 217.3,190.8 218.2,189.3 220.2,188.7 222.3,188.8 223.7,190.2 223.7,190.2 224.0,189.6 224.8,186.8 223.6,185.6 223.4,184.1 220.6,184.1 220.8,182.0 220.1,180.1 217.8,179.7 216.1,178.4 214.0,178.1 212.6,176.8 212.6,173.8 210.4,174.6 208.3,175.3 205.8,175.6Z"/>
<path fill="#f4f8f2" d="M223.7,190.2 222.3,188.8 220.2,188.7 218.2,189.3 217.3,190.8 216.6,193.4 216.6,193.4 218.1,194.5 219.3,195.9 221.0,196.3 222.5,197.0 224.5,198.2 223.5,199.6 223.1,201.2 224.8,201.4 227.5,201.6 229.1,200.5 229.4,198.6 229.4,198.6 229.9,196.2 227.8,195.9 227.2,193.5 225.8,192.9 224.2,193.2 223.5,191.8 223.7,190.2Z"/>
<path fill="#c7e5c1" d="M204.5,187.2 202.8,185.6 201.4,184.6 199.6,184.1 198.3,183.3 197.0,182.5 195.2,180.1 194.2,178.9 193.8,177.3 192.7,175.9 192.2,174.2 191.4,172.8 191.0,171.3 189.4,169.1 187.5,167.8 187.4,165.5 188.9,163.8 188.9,163.8 190.0,165.5 191.4,165.6 192.2,163.8 194.6,162.5 196.3,160.8 196.8,158.6 196.8,158.6 198.8,160.0 200.6,162.3 202.5,163.0 204.0,164.4 205.3,165.0 205.3,165.0 203.2,166.2 200.7,166.4 200.1,168.6 198.8,170.1 199.6,171.5 200.4,172.9 201.7,174.2 204.2,173.4 204.2,175.7 205.8,175.6 205.8,175.6 207.2,178.1 206.6,179.6 206.7,181.2 206.3,182.5 206.7,184.4 205.9,186.0 205.9,186.0 204.5,187.2Z"/>
<path fill="#c7e5c1" d="M188.9,163.8 189.4,163.1 188.0,161.9 188.3,160.0 189.2,158.4 189.9,156.8 191.3,156.2 191.3,156.2 193.3,157.3 195.2,157.8 196.8,158.6 196.8,158.6 196.3,160.8 194.6,162.5 192.2,163.8 191.4,165.6 190.0,165.5 188.9,163.8Z"/>
<path fill="#ffffff" d="M171.3,158.9 172.4,159.2 171.8,160.0Z"/>
<path fill="#5aab5a" d="M301.4,92.4 302.5,92.1 305.0,92.4 305.6,92.9 304.5,93.8 304.4,95.9 303.6,96.0 304.4,98.2 303.7,99.8 301.4,100.1 301.5,97.9 300.4,97.4 301.4,95.1Z"/>
<path fill="#3a8c3a" d="M301.4,92.4 300.8,90.7 302.8,89.6 304.5,89.4 306.3,89.7 308.1,90.3 309.9,89.9 312.6,90.0 313.2,90.7 314.8,91.0 316.5,91.1 318.1,91.5 320.4,91.6 320.4,92.4 318.7,93.4 316.7,94.1 314.9,96.2 315.7,97.3 314.3,98.7 312.9,99.8 311.9,100.4 310.2,101.0 308.5,100.6 306.9,101.5 305.5,100.8 303.7,99.8 304.4,98.2 303.6,96.0 304.4,95.9 304.5,93.8 305.6,92.9 305.0,92.4 302.5,92.1 301.4,92.4ZM319.2,96.0 320.8,95.7 320.3,96.5ZM317.4,97.0 317.9,96.8 317.6,97.3Z"/>
<path fill="#3a8c3a" d="M312.6,90.0 313.4,88.3 313.7,86.6 312.4,85.6 311.9,84.1 310.2,83.7 308.6,83.1 307.8,82.2 310.7,81.5 312.9,81.9 312.6,80.1 313.5,80.6 315.7,80.1 317.9,78.2 319.3,77.9 320.4,78.7 322.0,79.5 323.1,80.0 324.5,80.4 325.5,80.4 328.3,81.2 327.4,83.4 326.4,83.7 325.0,85.3 325.2,85.6 326.4,86.1 326.1,87.4 326.4,88.8 327.2,89.4 325.2,90.5 323.0,90.0 320.4,90.4 320.4,91.6 318.1,91.5 316.5,91.1 314.8,91.0 313.2,90.7 312.6,90.0ZM328.9,91.1 330.2,90.7 330.4,92.2 329.9,93.2 329.1,92.4Z"/>
<path fill="#286a28" d="M306.4,79.5 308.1,79.1 309.9,79.2 311.7,78.8 313.5,78.5 315.5,77.8 317.6,77.8 316.7,77.3 318.1,75.4 315.9,74.9 315.1,73.0 313.0,71.8 312.2,70.4 310.7,71.8 310.4,71.9 310.7,73.7 310.5,74.5 310.7,75.7 311.1,77.1 310.4,77.8 308.6,77.9Z"/>
<path fill="#98d094" d="M310.5,74.5 308.2,74.5 308.8,75.6 307.2,76.8 309.9,77.4 311.1,77.1 310.7,75.7Z"/>
<path fill="#5aab5a" d="M312.2,70.4 310.2,70.2 311.1,68.9 312.2,67.7 309.4,67.5 310.5,66.1 307.5,66.1 306.3,67.8 305.6,69.3 306.7,71.0 307.8,72.1 310.4,71.9 310.7,71.8ZM303.9,66.7 305.6,66.4 304.4,68.3ZM313.0,63.1 313.8,63.4 313.2,64.1ZM310.2,65.3 311.1,65.5 310.4,65.8Z"/>
<path fill="#98d094" d="M303.9,71.5 305.9,71.5 306.7,72.7 305.5,73.2 303.6,73.0 302.6,72.6Z"/>
<path fill="#5aab5a" d="M305.5,73.2 305.8,74.6 305.3,76.2 302.5,76.8 299.6,77.1 299.2,76.0 300.4,74.6 299.6,73.0 302.0,72.7 302.3,71.6 303.9,71.3 303.9,71.5 302.6,72.6 303.6,73.0 305.5,73.2Z"/>
<path fill="#286a28" d="M320.8,77.4 322.0,76.5 322.8,74.9 324.6,74.7 326.3,74.3 326.7,74.6 326.4,76.2 324.9,76.8 325.0,78.4 324.4,78.4 323.3,77.4Z"/>
<path fill="#3a8c3a" d="M319.3,77.9 320.4,78.7 322.0,79.5 323.1,80.0 324.5,80.4 325.5,79.2 325.0,78.4 324.4,78.4 323.3,77.4 320.8,77.4Z"/>
<path fill="#98d094" d="M324.5,80.4 325.5,80.4 325.5,79.2 324.7,79.5Z"/>
<path fill="#286a28" d="M326.7,74.6 326.3,74.3 328.8,73.5 328.9,71.9 331.0,72.1 332.6,72.9 335.1,72.7 337.8,73.5 338.4,75.6 338.6,78.1 336.5,78.2 334.6,79.2 335.9,80.3 337.1,81.5 335.9,83.6 333.9,83.8 331.9,83.7 330.5,83.6 329.0,83.1 327.4,83.4 328.3,81.2 325.5,80.4 325.5,79.2 325.0,78.4 324.9,76.8 326.4,76.2 326.7,74.6Z"/>
<path fill="#3a8c3a" d="M328.9,71.9 331.0,72.1 331.6,69.3 332.6,69.7 331.9,67.5 330.3,68.7 328.3,68.6 328.2,70.8ZM332.7,71.3 333.8,70.2 335.2,70.8 334.6,71.9ZM330.8,71.0 332.3,71.0 332.1,71.8 331.1,71.6Z"/>
<path fill="#286a28" d="M326.4,86.1 325.2,85.6 325.0,85.3 326.4,83.7 327.4,83.4 327.4,83.4 329.0,83.1 330.5,83.6 331.9,84.5 331.5,85.5 329.6,86.3 328.0,85.9 326.4,86.1Z"/>
<path fill="#3a8c3a" d="M330.5,83.6 331.9,83.7 333.9,83.8 335.9,83.6 337.1,81.5 339.0,81.2 340.5,81.9 342.2,81.9 342.3,82.8 341.4,83.6 340.6,84.7 338.2,85.3 337.0,85.2 334.9,84.8 333.4,84.8 331.9,84.5Z"/>
<path fill="#3a8c3a" d="M327.2,89.4 326.4,88.8 326.1,87.4 326.4,86.1 328.0,85.9 329.6,86.3 331.5,85.5 331.9,84.5 333.4,84.8 334.9,84.8 337.0,85.2 337.0,86.6 334.8,87.1 334.9,88.8 336.8,89.9 337.8,91.6 340.6,92.4 340.6,93.2 342.4,94.6 344.5,95.2 344.2,95.7 342.0,94.6 341.4,95.9 342.3,97.0 340.8,98.6 340.1,98.7 340.3,96.2 339.0,95.1 338.1,94.5 336.6,94.0 335.2,93.2 332.9,91.6 331.9,90.7 331.3,89.1 329.1,88.5ZM334.9,98.6 337.4,98.0 340.0,98.1 339.2,100.6 337.0,100.1 334.9,99.2ZM328.3,93.8 330.5,93.7 330.7,96.7 328.6,97.0 328.8,95.4Z"/>
<path fill="#5aab5a" d="M323.3,65.5 322.3,63.5 323.3,61.5 324.4,60.5 325.6,59.6 327.2,59.0 328.8,58.4 330.3,56.6 332.7,56.5 334.2,55.1 335.9,54.0 337.1,52.1 339.0,51.0 341.4,49.9 343.8,48.8 346.3,49.2 348.5,47.8 351.0,47.7 353.2,46.6 355.3,46.3 357.4,47.0 359.5,46.4 362.1,46.1 364.2,47.7 364.2,48.6 362.6,48.9 361.1,48.6 360.9,49.6 358.9,48.1 356.4,48.3 355.9,49.4 354.0,50.3 352.0,49.2 350.0,49.9 347.8,49.6 346.9,50.5 345.3,51.2 343.8,50.5 341.4,52.1 339.8,54.1 337.9,56.0 337.0,57.3 334.6,58.4 335.6,60.0 334.6,61.5 335.1,63.6 333.5,65.5 331.9,65.0 330.5,66.2 328.8,66.7 326.4,67.1 324.1,65.8ZM337.4,51.0 340.6,49.9 339.0,50.8Z"/>
<path fill="#5aab5a" d="M333.5,65.5 333.0,66.6 334.3,67.8 335.1,69.4 335.7,71.1 337.9,71.0 338.6,69.9 341.4,69.4 341.7,67.4 342.2,65.9 343.4,64.7 345.0,64.2 343.9,63.1 342.5,62.3 343.0,60.0 345.3,58.4 347.4,58.5 348.5,56.8 350.0,54.9 351.7,55.7 353.4,54.8 352.7,53.7 352.4,52.1 350.8,51.2 349.3,50.2 347.8,49.6 346.9,50.5 345.3,51.2 343.8,50.5 341.4,52.1 339.8,54.1 337.9,56.0 337.0,57.3 334.6,58.4 335.6,60.0 334.6,61.5 335.1,63.6 333.5,65.5ZM344.1,68.6 345.3,67.2 345.0,68.2ZM341.2,69.7 342.3,68.2 341.7,69.4Z"/>
<path fill="#5aab5a" d="M353.4,54.8 355.2,56.0 354.0,56.8 351.5,57.7 349.3,59.2 348.5,60.7 348.9,62.3 350.8,63.9 351.6,64.1 353.6,64.0 355.6,63.6 357.3,62.5 359.2,63.1 360.4,62.1 361.9,61.5 363.1,60.0 365.0,59.5 363.7,58.7 362.6,57.6 362.6,54.9 361.1,52.9 362.6,51.3 360.3,50.0 360.9,49.6 358.9,48.1 356.4,48.3 355.9,49.4 354.0,50.3 352.0,49.2 350.0,49.9 347.8,49.6 349.3,50.2 350.8,51.2 352.4,52.1 352.7,53.7 353.4,54.8Z"/>
<path fill="#98d094" d="M352.4,65.2 353.9,64.6 355.6,64.5 357.5,65.6 359.5,64.7 359.7,66.3 358.7,67.7 356.8,67.3 354.8,67.1 353.7,66.6 352.4,66.1ZM350.0,66.3 351.6,66.1 350.8,67.1Z"/>
<path fill="#c7e5c1" d="M348.5,68.9 348.8,67.8 350.8,67.5 353.7,68.3 353.7,67.1 354.8,67.1 356.8,67.3 358.7,67.7 359.8,69.9 357.1,70.7 354.8,69.7 352.7,69.5 350.6,70.3 348.5,70.0Z"/>
<path fill="#98d094" d="M348.5,70.0 350.6,70.3 352.7,69.5 354.8,69.7 357.1,70.7 355.9,73.0 354.2,73.3 352.4,73.4 351.3,72.7 351.2,71.8 348.8,71.3Z"/>
<path fill="#5aab5a" d="M346.6,72.7 348.8,71.3 351.2,71.8 351.3,72.7 348.9,72.0Z"/>
<path fill="#5aab5a" d="M337.8,73.5 339.6,72.9 341.4,72.6 343.0,72.4 344.5,72.1 346.6,72.7 348.9,72.0 351.3,72.7 352.4,73.4 353.0,75.4 352.6,76.5 353.2,78.4 352.2,79.7 351.2,81.1 348.6,81.0 346.1,80.6 345.0,80.4 343.4,80.3 342.2,79.3 340.5,78.4 338.6,78.1 338.4,75.6 337.8,73.5Z"/>
<path fill="#5aab5a" d="M338.6,78.1 336.5,78.2 334.6,79.2 335.9,80.3 337.1,81.5 339.0,81.2 340.5,81.9 342.2,81.9 343.8,81.5 345.0,80.4 343.4,80.3 342.2,79.3 340.5,78.4Z"/>
<path fill="#98d094" d="M342.2,81.9 343.8,81.5 345.0,80.4 346.1,80.6 348.6,81.0 351.2,81.1 350.2,82.2 348.5,81.9 346.9,82.5 345.0,83.1 342.3,82.8Z"/>
<path fill="#98d094" d="M342.3,82.8 345.0,83.1 346.9,82.5 348.5,81.9 350.2,82.2 351.5,82.8 350.3,84.3 348.8,85.6 347.4,85.8 345.0,86.1 342.2,85.9 340.6,84.7 341.4,83.6Z"/>
<path fill="#5aab5a" d="M337.0,85.2 338.2,85.3 340.6,84.7 341.2,85.2 340.0,86.3 338.5,86.7 337.0,86.6Z"/>
<path fill="#98d094" d="M337.0,86.6 338.5,86.7 340.0,86.3 341.2,85.2 342.2,85.9 345.0,86.1 345.3,87.2 343.7,87.5 342.2,87.2 340.3,87.2 340.6,89.1 343.0,90.7 344.5,91.6 343.2,90.3 341.4,89.9 339.0,88.3 337.9,87.1 336.8,87.5Z"/>
<path fill="#e0f0dc" d="M340.3,87.2 342.2,87.2 343.7,87.5 345.3,87.2 346.1,89.1 344.5,91.3 343.0,90.7 340.6,89.1Z"/>
<path fill="#98d094" d="M345.3,87.2 345.0,86.1 347.4,85.8 349.1,87.8 351.2,88.8 350.8,89.9 350.7,91.8 349.3,91.9 347.7,91.0 345.8,89.9 346.1,89.1Z"/>
<path fill="#e0f0dc" d="M344.5,91.3 345.8,89.9 347.7,91.0 346.0,92.4Z"/>
<path fill="#e0f0dc" d="M346.0,92.4 347.7,91.0 347.8,92.4 348.5,94.1 346.9,95.9 346.0,94.8Z"/>
<path fill="#e0f0dc" d="M347.8,92.4 349.3,91.9 350.7,91.8 351.6,93.4 350.1,94.0 348.5,94.1Z"/>
<path fill="#98d094" d="M351.5,82.8 353.0,83.0 354.6,83.3 357.3,82.3 358.7,83.6 359.8,85.0 359.8,86.7 362.2,87.1 360.4,89.4 357.9,88.9 355.6,89.6 353.3,89.3 351.2,88.8 349.1,87.8 347.4,85.8 348.8,85.6 350.3,84.3Z"/>
<path fill="#98d094" d="M351.2,88.8 353.3,89.3 355.6,89.6 357.9,88.9 360.4,89.4 359.5,92.2 357.0,92.7 355.2,93.4 353.4,93.5 351.6,93.4 350.7,91.8 350.8,89.9Z"/>
<path fill="#5aab5a" d="M346.9,95.9 348.5,94.1 350.1,94.0 351.6,93.4 353.4,93.5 355.2,93.4 357.0,92.7 356.4,94.0 354.8,93.8 353.2,94.1 352.4,95.1 351.2,94.8 352.1,96.7 353.2,98.2 351.9,98.7 351.9,100.9 350.4,100.9 349.4,100.3 348.8,98.1 347.2,96.5ZM352.4,102.5 356.8,103.0 354.5,103.4Z"/>
<path fill="#e0f0dc" d="M357.3,82.3 359.5,82.3 361.4,83.0 362.6,85.3 361.2,85.9 359.8,86.7 359.8,85.0 358.7,83.6 357.3,82.3Z"/>
<path fill="#98d094" d="M350.2,82.2 351.2,81.1 352.2,79.7 353.2,78.4 352.6,76.5 355.6,76.7 357.0,77.6 358.7,77.3 361.1,78.0 363.4,77.4 364.2,76.3 366.1,75.5 368.2,76.0 369.6,77.7 371.3,79.0 373.3,79.2 375.2,79.8 376.8,80.1 378.4,80.3 377.9,83.1 375.6,84.2 372.9,84.8 370.5,85.6 372.9,86.9 370.5,87.8 368.2,88.5 366.6,86.9 368.2,85.9 366.6,85.3 365.0,85.0 362.6,85.3 362.6,85.3 361.4,83.0 359.5,82.3 357.3,82.3 354.6,83.3 353.0,83.0 351.5,82.8Z"/>
<path fill="#c7e5c1" d="M352.6,76.5 353.0,75.4 352.4,73.4 354.2,73.3 355.9,73.0 357.1,70.7 359.8,69.9 362.1,69.6 364.1,70.8 363.9,72.1 365.4,73.1 366.9,74.1 364.7,74.8 364.2,76.3 363.4,77.4 361.1,78.0 358.7,77.3 357.0,77.6 355.6,76.7 352.6,76.5Z"/>
<path fill="#98d094" d="M366.3,103.3 367.4,102.6 369.9,102.2 368.9,103.4 367.4,103.9Z"/>
<path fill="#ffffff" d="M337.8,101.7 338.4,101.9 338.1,102.0Z"/>
<path fill="#ffffff" d="M303.9,60.3 305.2,60.3 304.7,61.5Z"/>
<path fill="#5aab5a" d="M364.2,48.6 365.9,48.4 367.4,49.1 369.8,48.3 372.1,49.4 373.8,50.9 376.3,49.8 377.8,51.8 380.0,51.8 380.4,53.8 378.3,54.5 376.0,54.5 373.7,53.8 371.2,54.3 368.9,53.3 366.6,52.7 369.2,54.1 370.2,56.8 372.9,57.8 375.2,57.0 376.9,57.3 378.4,56.5 379.2,54.8 382.0,55.3 384.7,54.3 383.9,52.5 385.0,50.8 386.8,52.0 388.6,51.0 387.9,53.2 389.8,53.3 391.0,51.8 393.7,52.4 396.2,51.1 398.9,51.0 401.2,51.0 403.5,50.2 406.0,50.2 408.2,49.2 410.7,49.7 411.5,48.5 414.1,49.7 417.0,49.3 418.8,50.3 420.9,50.0 423.3,51.0 421.4,50.5 420.9,48.6 420.6,46.6 422.0,46.0 423.3,45.2 424.1,43.6 426.8,43.7 429.6,43.7 429.9,46.1 429.5,48.0 428.8,49.7 430.6,49.8 431.6,51.3 430.1,52.1 429.6,53.7 431.9,53.2 432.0,51.4 433.5,50.5 433.2,48.2 431.2,46.1 432.3,45.1 433.5,44.2 435.9,44.4 438.2,44.7 440.2,44.5 442.2,45.0 443.0,42.6 445.6,42.0 448.2,41.7 450.8,42.0 452.4,40.3 454.7,39.4 457.1,39.3 459.4,38.1 461.8,37.9 464.3,39.6 466.6,38.5 468.8,39.2 470.8,38.6 472.9,37.9 475.3,37.6 477.3,36.1 479.7,36.0 481.9,36.2 483.9,37.1 482.3,38.2 485.0,38.6 487.5,37.0 490.2,37.6 492.3,37.8 494.2,38.9 492.6,40.4 490.3,40.6 488.6,41.9 490.9,43.0 493.4,42.2 496.0,41.9 498.6,42.4 501.2,42.5 503.6,42.2 506.0,42.1 508.4,43.4 510.7,42.3 513.1,41.4 515.4,42.6 516.7,44.2 518.6,45.0 518.6,46.7 520.2,46.4 521.7,46.9 523.0,45.5 524.9,45.6 527.5,44.5 530.1,46.7 532.8,45.6 534.4,45.1 535.9,44.2 538.2,44.9 540.6,44.6 543.0,43.6 545.3,44.5 547.6,43.9 549.4,46.1 551.6,45.6 553.8,45.4 555.6,46.7 558.0,47.5 560.3,45.6 562.7,46.4 565.1,46.6 567.4,47.4 568.2,48.8 570.5,48.6 572.9,48.2 575.3,48.8 577.6,47.7 580.0,48.3 582.0,49.1 583.9,48.0 584.7,49.7 587.5,50.3 589.8,47.9 592.6,48.5 594.9,48.0 596.7,49.9 598.9,49.9 598.0,51.9 598.9,54.0 598.9,56.0 597.3,56.6 595.8,57.1 597.8,57.9 598.1,60.0 595.8,60.9 593.4,60.2 591.0,60.8 589.1,62.7 586.3,62.9 583.9,63.9 581.6,63.5 579.2,63.2 576.8,63.9 574.7,64.8 572.9,66.3 571.3,67.4 572.1,69.9 570.5,72.1 569.0,73.4 567.4,74.6 566.4,76.1 564.7,76.5 562.2,78.1 561.9,76.3 560.6,74.9 561.1,73.0 560.6,71.0 561.9,68.6 563.4,66.8 565.8,66.3 567.1,64.7 569.4,64.6 570.5,63.0 571.9,61.2 573.7,60.0 571.6,60.1 569.4,59.9 567.4,61.1 565.0,61.0 562.7,61.2 561.6,63.4 559.5,64.8 556.8,65.4 554.0,65.2 551.6,65.2 549.3,64.8 547.1,64.9 545.0,65.4 542.8,65.1 540.6,64.8 538.5,65.3 536.5,66.0 535.1,67.8 532.8,68.9 531.0,70.8 528.8,72.1 530.4,72.7 532.0,73.4 534.3,73.9 536.7,74.6 538.3,76.2 537.6,77.6 536.7,78.9 536.3,80.4 536.4,82.0 535.2,83.8 533.5,85.2 531.7,86.9 529.6,88.3 527.6,90.0 525.2,91.0 522.5,90.4 521.3,91.8 521.7,90.7 521.9,89.1 522.0,87.5 524.9,87.2 526.0,84.7 527.6,82.3 525.5,82.3 523.7,83.1 521.7,83.3 521.3,81.4 518.7,80.7 516.2,80.0 515.4,77.7 513.8,75.7 512.0,74.6 509.9,74.1 507.6,74.4 505.2,74.6 504.4,77.0 503.5,78.3 502.8,79.7 500.9,80.4 499.2,80.0 497.0,79.9 494.9,79.3 492.6,79.9 490.2,80.8 487.5,79.9 484.7,79.8 482.7,79.7 480.8,79.0 478.8,78.6 476.8,78.9 476.0,77.3 473.3,77.1 470.5,76.5 469.6,78.0 469.0,79.7 467.0,80.1 465.0,79.7 462.6,79.4 460.3,78.4 458.3,79.1 456.4,80.1 453.7,80.9 452.9,80.9 450.1,80.3 447.8,79.7 446.1,78.1 443.8,78.3 441.4,78.4 440.3,76.7 438.5,75.8 437.5,74.1 435.9,73.0 433.4,73.0 431.2,74.0 430.4,73.2 428.8,72.7 427.2,73.0 426.4,71.3 424.8,70.9 423.3,71.8 420.6,72.6 417.8,72.6 414.9,72.5 412.3,73.5 411.5,75.7 409.9,78.1 412.3,78.4 409.9,77.6 407.5,78.1 405.1,77.8 402.8,78.5 401.2,77.8 398.9,77.7 396.5,77.3 394.9,77.0 393.1,77.8 391.8,79.3 389.4,80.9 389.1,82.3 390.7,83.3 391.8,84.8 392.9,85.3 391.4,85.8 390.2,86.7 389.4,88.3 390.2,90.7 391.8,92.4 390.2,92.1 388.6,92.6 386.3,91.3 383.9,91.0 382.3,90.6 380.8,90.2 378.4,90.0 376.0,88.5 373.7,87.2 375.6,85.6 377.1,84.2 375.6,84.2 377.9,83.1 378.4,80.3 376.8,80.1 375.2,79.8 373.3,79.2 371.3,79.0 369.6,77.7 368.2,76.0 366.1,75.5 364.2,76.3 364.7,74.8 366.9,74.1 365.4,73.1 363.9,72.1 364.1,70.8 362.1,69.6 359.8,69.9 358.7,67.7 359.7,66.3 359.5,64.7 361.2,65.2 362.6,64.1 360.3,63.4 359.2,63.1 360.4,62.1 361.9,61.5 363.1,60.0 365.0,59.5 363.7,58.7 362.6,57.6 362.6,54.9 361.1,52.9 362.6,51.3 360.3,50.0 360.9,49.6 361.1,48.6 362.6,48.9 364.2,48.6ZM396.5,45.8 398.9,46.9 401.2,47.3 403.6,46.7 406.0,47.2 403.4,46.5 402.0,44.2 403.6,41.9 405.9,41.4 407.8,40.0 409.9,39.0 412.0,38.7 414.0,37.8 416.1,37.6 418.2,37.0 420.4,38.0 422.5,37.4 424.1,38.2 421.7,37.7 419.5,38.2 417.4,39.4 415.3,40.4 413.0,40.3 411.3,42.1 408.6,41.1 406.8,42.6 404.8,42.6 402.8,43.0 401.2,43.4 399.7,44.2 397.6,44.0ZM466.6,33.0 468.9,33.6 470.9,32.6 472.9,31.8 475.6,32.1 478.0,33.4 480.8,33.3 479.5,34.8 477.6,34.4 475.6,35.4 473.4,35.1 471.3,34.8 469.2,33.3ZM531.2,39.5 532.5,38.3 534.3,38.5 536.4,39.3 538.5,38.4 540.6,38.7 542.9,38.6 545.0,39.2 547.3,38.7 549.4,40.0 551.6,39.8 549.1,41.1 546.3,39.4 543.8,40.6 541.2,41.0 538.5,40.9 535.9,41.1 533.3,40.9ZM535.9,42.0 537.9,41.7 539.8,42.0 541.4,43.1 538.6,43.6 535.9,43.0ZM596.5,46.3 598.9,45.8 601.3,45.8 602.8,46.6 600.1,47.2 597.3,46.9ZM539.0,72.9 540.6,74.9 540.5,77.3 541.1,79.7 542.2,81.2 540.9,82.1 540.3,83.6 541.4,85.5 539.0,85.9 539.4,84.4 539.0,82.8 539.3,80.8 539.4,78.9 538.7,76.5 538.9,74.7ZM391.8,49.3 394.1,48.9 393.0,50.2ZM408.3,47.7 410.7,48.3 407.5,48.5ZM31.9,46.3 34.3,45.8 35.8,46.6 33.9,47.2 31.9,46.9ZM31.9,49.9 34.0,49.8 35.9,50.9 37.9,51.0 39.8,52.1 41.7,52.9 43.8,53.0 45.9,52.9 47.6,54.3 46.1,56.4 43.7,57.1 41.0,56.3 38.2,55.6 36.1,55.2 34.0,56.4 31.9,56.0 30.9,54.0 32.4,51.9ZM545.3,86.7 548.5,87.1 551.6,85.6ZM554.8,84.4 556.2,82.8 557.9,81.5 559.0,80.3 560.3,79.3 559.2,80.8 557.2,82.8ZM576.8,71.3 578.0,72.1 576.5,71.8Z"/>
<path fill="#c7e5c1" d="M392.9,85.3 391.8,84.8 390.7,83.3 389.1,82.3 389.4,80.9 391.8,79.3 393.1,77.8 394.9,77.0 396.5,77.3 398.9,77.7 401.2,77.8 402.8,78.5 405.1,77.8 407.5,78.1 409.9,77.6 412.3,78.4 409.9,78.1 411.5,75.7 412.3,73.5 414.9,72.5 417.8,72.6 420.6,72.6 423.3,71.8 424.8,70.9 426.4,71.3 427.2,73.0 428.8,72.7 430.4,73.2 431.2,74.0 433.4,73.0 435.9,73.0 437.5,74.1 438.5,75.8 440.3,76.7 441.4,78.4 443.8,78.3 446.1,78.1 447.8,79.7 450.1,80.3 452.9,80.9 453.7,80.9 452.1,81.2 450.8,82.0 450.1,84.1 448.1,83.7 446.1,84.1 445.3,86.7 443.4,87.4 441.4,87.5 441.3,89.2 442.2,90.7 441.7,91.9 439.8,91.0 437.5,90.8 435.1,90.7 433.6,90.1 431.9,90.4 431.2,91.5 429.2,91.0 427.2,91.1 426.4,92.1 424.1,93.2 422.5,94.1 420.1,93.5 419.4,90.8 417.0,89.6 414.3,88.7 411.5,88.5 409.5,87.6 407.5,86.6 405.6,87.1 403.6,87.5 403.3,89.5 404.0,91.4 403.6,93.4 402.3,92.1 400.4,91.8 398.1,92.6 398.6,91.0 396.0,90.4 394.6,88.6 396.0,87.1 398.9,87.1 398.9,84.7 397.3,84.5 395.7,84.4 392.9,85.3Z"/>
<path fill="#c7e5c1" d="M453.7,80.9 456.4,80.1 458.3,79.1 460.3,78.4 462.6,79.4 465.0,79.7 467.0,80.1 469.0,79.7 469.6,78.0 470.5,76.5 473.3,77.1 476.0,77.3 476.8,78.9 478.8,78.6 480.8,79.0 482.7,79.7 484.7,79.8 487.5,79.9 490.2,80.8 492.6,79.9 494.9,79.3 497.0,79.9 499.2,80.0 500.9,80.4 499.3,81.8 497.3,82.5 498.1,83.0 500.1,82.6 502.0,82.8 504.2,84.4 503.9,85.0 501.4,84.8 498.9,85.5 497.0,86.8 494.9,87.7 493.3,87.7 491.6,87.5 491.6,89.6 489.3,91.1 487.0,91.6 484.7,91.6 482.6,91.9 480.8,92.9 478.2,92.3 475.5,92.1 472.9,91.3 471.0,91.2 469.0,91.2 467.1,91.0 465.7,88.8 464.1,88.4 462.7,87.7 460.7,87.4 458.7,87.2 457.5,85.3 457.1,83.1 455.5,81.9 453.7,80.9Z"/>
<path fill="#1b5618" d="M521.3,91.8 521.7,90.7 521.9,89.1 522.0,87.5 524.9,87.2 526.0,84.7 527.6,82.3 525.5,82.3 523.7,83.1 521.7,83.3 521.3,81.4 518.7,80.7 516.2,80.0 515.4,77.7 513.8,75.7 512.0,74.6 509.9,74.1 507.6,74.4 505.2,74.6 504.4,77.0 503.5,78.3 502.8,79.7 500.9,80.4 499.3,81.8 497.3,82.5 498.1,83.0 500.1,82.6 502.0,82.8 504.2,84.4 503.9,85.0 501.4,84.8 498.9,85.5 497.0,86.8 494.9,87.7 493.3,87.7 491.6,87.5 491.6,89.6 489.3,91.1 487.0,91.6 484.7,91.6 482.6,91.9 480.8,92.9 478.2,92.3 475.5,92.1 472.9,91.3 471.0,91.2 469.0,91.2 467.1,91.0 465.7,88.8 464.1,88.4 462.7,87.7 460.7,87.4 458.7,87.2 457.5,85.3 457.1,83.1 455.5,81.9 453.7,80.9 452.1,81.2 450.8,82.0 450.1,84.1 448.1,83.7 446.1,84.1 445.3,86.7 443.4,87.4 441.4,87.5 441.3,89.2 442.2,90.7 441.7,91.9 439.8,92.6 438.2,93.8 436.6,93.9 435.1,94.8 433.2,95.2 431.6,96.2 431.3,97.8 433.5,99.7 432.9,100.1 435.1,102.0 437.9,102.5 439.8,104.4 439.0,107.1 440.1,109.3 441.5,110.1 443.0,110.8 444.5,110.7 445.9,112.0 447.7,112.7 449.2,113.6 450.8,114.3 452.5,114.2 454.2,114.5 455.3,114.3 456.4,114.0 458.0,114.7 459.8,114.6 461.1,114.6 462.9,113.9 464.2,112.4 466.9,112.1 468.6,113.8 470.5,114.9 470.9,117.8 470.3,119.4 469.1,120.6 471.2,121.9 471.6,123.6 473.2,124.5 474.8,124.9 475.6,123.1 476.4,123.1 477.6,123.0 479.4,122.2 481.2,121.7 483.5,122.5 485.5,124.5 487.9,124.5 489.1,126.4 489.4,124.9 491.3,124.2 494.2,123.4 495.4,123.1 497.2,123.0 498.9,122.2 500.1,121.0 501.2,119.8 503.6,118.2 504.1,116.2 504.7,114.8 506.0,113.8 507.2,111.9 506.8,110.7 507.5,109.6 506.0,107.2 505.2,104.9 503.1,103.3 504.9,101.5 506.6,101.1 508.2,100.1 506.0,99.2 504.5,99.8 502.8,99.7 501.2,98.1 500.8,96.8 502.8,96.2 504.4,95.2 506.0,94.1 507.9,94.6 506.3,97.0 508.3,96.2 511.2,95.4 512.7,94.4 513.8,93.0 515.5,93.0 517.0,92.2 518.4,91.6 519.8,90.8 521.3,91.8ZM486.6,128.0 488.6,126.7 490.2,127.4 488.6,129.6 486.8,129.3Z"/>
<path fill="#ffffff" d="M504.6,122.2 504.9,120.4 506.0,118.9 507.4,119.0 506.8,121.4 505.7,123.8Z"/>
<path fill="#ffffff" d="M511.2,95.4 512.7,94.4 513.8,93.0 515.5,93.0 517.0,92.2 518.4,91.6 519.8,90.8 521.3,91.8 519.7,93.8 517.7,94.3 516.2,95.7 517.5,97.6 515.0,98.9 512.3,98.9 512.3,97.4 512.7,96.2Z"/>
<path fill="#5aab5a" d="M515.0,98.9 517.5,97.6 518.3,98.9 519.2,100.1 519.2,102.5 517.8,103.4 516.3,104.2 514.6,104.2 514.3,102.5 514.6,100.6ZM514.2,105.8 515.3,105.6 514.6,106.1Z"/>
<path fill="#ffffff" d="M521.6,104.9 523.3,102.8 526.1,102.8 528.8,102.3 529.6,101.0 530.9,100.1 532.5,99.7 534.0,98.9 534.6,97.2 535.9,96.2 535.9,93.8 538.1,93.2 538.1,94.8 539.0,96.2 537.5,98.6 537.3,100.1 537.2,101.7 535.9,103.3 534.0,103.7 531.2,103.9 530.9,104.4 529.3,105.6 528.0,103.9 526.4,103.8 524.9,104.4 523.3,105.0ZM520.1,105.6 521.7,105.0 523.1,106.4 522.2,108.9 520.5,109.3 519.8,106.9ZM524.1,105.2 525.7,105.0 527.2,104.5 526.8,106.0 524.9,106.9ZM535.9,93.0 536.4,90.4 537.8,88.8 538.6,86.9 540.6,88.8 542.4,89.1 544.2,89.1 544.6,90.4 542.9,91.1 541.4,92.2 539.4,92.1 537.5,91.5 536.5,92.2ZM517.0,116.2 517.5,116.5 516.5,117.3Z"/>
<path fill="#5aab5a" d="M422.8,121.1 424.6,120.5 426.4,120.1 427.2,117.5 426.0,116.3 425.6,114.6 427.4,113.3 429.6,112.9 430.7,111.6 431.9,110.4 432.9,108.0 431.9,106.4 431.9,104.1 434.0,103.7 435.8,102.6 437.9,102.5 439.8,104.4 439.0,107.1 440.1,109.3 441.5,110.1 443.0,110.8 441.7,112.7 443.3,113.4 444.5,114.5 446.1,115.1 447.7,115.2 449.4,115.4 450.8,116.3 452.5,116.6 454.2,116.8 454.2,114.5 455.3,114.3 455.6,115.6 456.8,116.3 458.5,116.0 460.3,116.0 459.8,114.6 461.1,114.6 462.9,113.9 464.2,112.4 466.9,112.1 468.6,113.8 468.2,115.6 466.9,116.6 465.3,117.0 464.4,119.0 463.8,120.9 462.3,122.2 461.9,123.8 461.2,123.9 460.8,121.1 459.2,121.9 460.0,120.3 460.6,119.0 458.9,118.6 457.1,118.6 456.8,117.5 454.8,116.8 454.3,119.0 455.3,120.1 455.1,122.2 455.6,123.9 454.0,124.2 452.4,124.9 451.6,126.9 449.3,127.7 448.0,128.8 446.9,130.1 445.0,132.1 442.7,133.5 441.6,135.6 441.9,137.6 441.1,140.3 441.1,142.2 439.8,143.8 438.6,144.5 437.5,145.6 435.9,144.2 435.4,142.2 434.8,140.3 433.2,137.9 433.0,136.3 432.4,134.8 431.0,132.4 431.1,130.3 430.2,128.5 429.7,126.9 429.9,125.3 429.6,124.5 428.0,125.1 426.4,125.6 425.3,124.4 424.1,123.3 426.1,122.2 424.6,121.2 422.8,121.1Z"/>
<path fill="#c7e5c1" d="M441.1,143.4 441.9,143.0 442.7,145.0 444.2,146.4 443.3,148.5 441.7,149.0 441.1,147.4 440.9,145.8Z"/>
<path fill="#5aab5a" d="M412.4,118.7 412.7,116.7 414.9,115.6 414.3,114.0 412.6,113.0 411.3,111.5 413.8,112.1 415.4,111.8 417.0,111.9 419.8,111.3 420.1,109.6 422.4,109.1 424.5,108.2 424.9,106.4 426.0,105.6 427.5,104.5 428.0,102.5 428.0,101.1 430.4,100.4 432.9,100.1 435.1,102.0 437.9,102.5 435.8,102.6 434.0,103.7 431.9,104.1 431.9,106.4 432.9,108.0 431.9,110.4 430.7,111.6 429.6,112.9 427.4,113.3 425.6,114.6 426.0,116.3 427.2,117.5 426.4,120.1 424.6,120.5 422.8,121.1 421.4,119.3 420.1,118.4 418.6,118.7 417.0,118.7 414.7,118.3Z"/>
<path fill="#f4f8f2" d="M411.3,111.5 412.7,109.6 411.2,108.3 410.8,105.6 411.0,103.9 411.8,102.3 414.3,102.8 415.8,102.1 417.0,100.9 418.9,99.3 420.1,99.5 421.7,99.8 423.3,99.8 425.6,99.2 427.5,98.1 428.2,100.1 430.4,99.5 432.9,100.1 430.4,100.4 428.0,101.1 428.0,102.5 427.5,104.5 426.0,105.6 424.9,106.4 424.5,108.2 422.4,109.1 420.1,109.6 419.8,111.3 417.0,111.9 415.4,111.8 413.8,112.1 411.3,111.5Z"/>
<path fill="#5aab5a" d="M386.0,99.8 385.3,97.9 385.0,96.3 386.0,95.9 388.2,97.1 391.0,96.2 392.4,97.9 394.1,99.5 395.7,100.2 397.3,100.6 398.8,100.2 400.3,99.7 402.8,98.4 405.5,98.2 407.3,98.5 408.8,99.3 410.2,100.2 411.8,100.8 411.8,102.3 411.0,103.9 410.8,105.6 411.2,108.3 412.7,109.6 411.3,111.5 412.6,113.0 414.3,114.0 414.9,115.6 412.7,116.7 412.4,118.7 410.4,118.6 408.3,118.4 405.6,117.8 404.9,115.7 403.3,116.4 401.7,116.7 398.9,115.9 396.5,114.5 395.4,112.7 394.1,110.8 392.4,110.5 391.8,111.2 390.5,109.6 390.7,107.5 389.1,107.3 387.9,106.3 387.1,104.1 388.2,103.0 386.9,101.7 386.0,99.8Z"/>
<path fill="#98d094" d="M386.0,99.8 384.1,100.1 382.2,100.0 380.4,100.9 380.0,102.5 380.0,104.2 378.1,104.8 376.5,105.8 377.1,107.7 379.0,108.2 381.5,109.4 383.8,110.7 385.8,112.4 388.6,112.6 390.5,111.2 391.8,111.2 390.5,109.6 390.7,107.5 389.1,107.3 387.9,106.3 387.1,104.1 388.2,103.0 386.9,101.7 386.0,99.8Z"/>
<path fill="#c7e5c1" d="M388.6,112.6 390.5,111.2 391.6,113.5 390.2,113.5Z"/>
<path fill="#e0f0dc" d="M372.4,101.9 373.2,100.4 374.8,101.0 376.5,100.6 378.1,100.4 379.7,100.0 382.2,100.0 380.4,100.9 380.0,102.5 380.0,104.2 378.1,104.8 376.5,105.8 374.7,106.3 373.4,107.5 371.6,106.9 371.9,105.8 372.7,104.1 372.1,103.9 371.8,102.2Z"/>
<path fill="#c7e5c1" d="M372.1,103.9 372.7,104.1 371.9,105.8 370.7,106.3Z"/>
<path fill="#c7e5c1" d="M371.5,106.9 373.4,107.5 374.7,106.3 376.5,105.8 377.1,107.7 375.4,108.2 373.7,108.8 375.2,110.4 374.5,111.2 372.3,112.4 370.5,111.9 371.3,110.5 371.2,108.9Z"/>
<path fill="#5aab5a" d="M369.4,109.1 370.4,111.9 370.8,110.5 371.2,108.9 371.5,106.9 371.6,106.1 370.7,106.3 370.1,107.7Z"/>
<path fill="#5aab5a" d="M370.4,112.1 372.3,112.4 374.5,111.2 375.2,110.4 373.7,108.8 375.4,108.2 377.1,107.7 379.0,108.2 381.5,109.4 383.8,110.7 385.8,112.4 388.6,112.6 390.2,113.5 391.6,113.5 392.3,114.9 394.3,116.7 394.5,118.2 395.4,119.5 395.7,119.7 396.7,120.3 398.2,122.3 400.3,123.0 402.3,122.6 403.1,123.8 402.1,125.2 402.0,126.9 399.7,127.9 397.3,128.5 395.0,129.0 392.6,129.1 391.3,129.7 390.1,130.9 388.5,131.3 386.8,130.9 385.0,131.0 383.6,130.8 383.4,132.3 382.8,132.6 381.5,130.4 381.0,128.7 379.7,127.7 378.7,126.0 377.1,125.0 376.8,123.0 376.0,121.3 374.5,120.3 374.0,118.8 373.2,117.5 371.9,116.0 370.8,114.3Z"/>
<path fill="#98d094" d="M395.4,119.5 395.7,117.5 396.7,117.8 396.7,119.7 395.7,119.7Z"/>
<path fill="#c7e5c1" d="M382.8,132.6 383.4,132.3 383.6,130.8 385.0,131.0 386.8,130.9 388.5,131.3 390.1,130.9 391.3,129.7 392.6,129.1 395.0,129.0 397.3,128.5 395.4,129.8 393.1,130.1 391.2,131.3 389.1,132.4 387.0,133.1 385.0,134.3 382.8,134.8 383.4,137.5 383.9,138.4 386.3,138.2 388.1,137.3 390.2,137.1 392.6,136.3 395.3,135.5 397.6,133.8 399.0,132.1 396.7,132.6 394.4,132.5 392.1,132.5 389.8,132.6 387.5,132.8 385.1,132.3Z"/>
<path fill="#c7e5c1" d="M399.0,132.1 397.8,130.5 397.3,128.5 399.7,127.9 402.0,126.9 402.1,125.2 403.1,123.8 402.3,122.6 403.6,120.4 404.2,119.2 405.2,120.6 407.7,121.2 409.6,123.0 408.3,124.4 407.5,126.1 406.4,128.5 404.4,130.1 402.0,131.6 400.5,131.4ZM403.8,117.1 404.4,117.0 404.1,118.1Z"/>
<path fill="#98d094" d="M396.7,120.3 398.2,122.3 400.3,123.0 402.3,122.6 403.1,123.8 402.3,122.6 403.6,120.4 404.2,119.2 403.8,117.5 402.3,118.2 400.4,120.3 398.1,120.3Z"/>
<path fill="#f4f8f2" d="M398.1,92.6 400.4,91.8 402.3,92.1 403.6,93.4 405.2,93.4 406.4,92.3 407.5,91.1 409.9,91.9 411.2,93.1 412.9,93.7 415.3,94.9 417.0,97.0 418.6,97.7 420.1,98.6 420.1,99.5 418.9,99.3 417.0,100.9 415.8,102.1 414.3,102.8 411.8,102.3 411.8,100.8 410.2,100.2 408.8,99.3 407.3,98.5 405.5,98.2 402.8,98.4 400.3,99.7 400.1,97.0 398.9,95.4 398.6,93.8Z"/>
<path fill="#c7e5c1" d="M403.6,93.4 404.0,91.4 403.3,89.5 403.6,87.5 405.6,87.1 407.5,86.6 409.5,87.6 411.5,88.5 414.3,88.7 417.0,89.6 419.4,90.8 420.1,93.5 422.5,94.1 424.1,93.2 426.4,92.1 424.1,92.5 421.7,92.2 419.3,92.4 417.0,92.6 414.6,92.3 412.3,93.1 409.9,93.3 407.6,93.5 405.2,93.4 406.4,92.3 407.5,91.1 409.9,91.9 411.2,93.1 412.9,93.7 415.3,94.9 417.0,97.0 418.6,97.7 420.1,98.6 420.1,99.5 421.7,99.8 422.5,98.6 421.7,96.7 423.3,96.2 424.5,95.1 426.4,94.9 428.3,95.1 430.4,94.1 428.7,94.2 427.2,93.5 426.4,92.1 424.2,92.4 421.8,92.0 419.6,92.2 417.3,92.4 415.0,92.3 412.7,93.0 410.5,93.5 408.2,93.6 405.9,93.3Z"/>
<path fill="#f4f8f2" d="M426.4,92.1 427.2,91.1 429.2,91.0 431.2,91.5 431.9,90.4 433.6,90.1 435.1,90.7 437.5,90.8 439.8,91.0 441.7,91.9 439.8,92.6 438.2,93.8 436.6,93.9 435.1,94.8 433.2,95.2 431.6,96.2 429.8,96.7 428.0,96.2 426.4,96.2 424.9,96.0 424.5,95.1 426.4,94.9 428.3,95.1 430.4,94.1 428.7,94.2 427.2,93.5Z"/>
<path fill="#f4f8f2" d="M421.7,96.7 423.3,96.2 424.5,95.1 424.9,96.0 426.4,96.2 428.0,96.2 429.8,96.7 431.6,96.2 431.3,97.8 433.5,99.7 432.9,100.1 430.4,99.5 428.2,100.1 427.5,98.1 425.6,99.2 423.3,99.8 421.7,99.8 422.5,98.6Z"/>
<path fill="#98d094" d="M378.4,90.0 380.8,90.2 382.3,90.6 383.9,91.0 386.3,91.3 388.6,92.6 388.5,93.7 386.3,93.5 383.9,93.7 382.5,92.9 380.8,93.0 379.7,91.4Z"/>
<path fill="#98d094" d="M383.9,93.7 386.3,93.5 387.5,94.8 388.6,96.2 388.2,97.1 386.0,95.9 384.2,95.2Z"/>
<path fill="#c7e5c1" d="M386.3,93.5 388.5,93.7 388.6,92.6 390.2,92.1 391.8,92.4 392.8,93.8 394.1,94.8 393.0,96.5 392.4,97.9 391.0,96.2 388.2,97.1 388.6,96.2 387.5,94.8Z"/>
<path fill="#5aab5a" d="M356.4,94.0 357.0,92.7 359.5,92.2 361.1,93.5 363.0,93.4 365.0,93.4 366.6,92.8 368.2,92.2 370.8,92.2 372.9,93.4 374.6,93.2 376.0,94.0 377.6,94.4 379.2,93.8 380.8,93.0 382.5,92.9 383.9,93.7 384.2,95.2 386.0,95.9 385.0,96.3 385.3,97.9 386.0,99.8 384.1,100.1 382.2,100.0 379.7,100.0 378.1,100.4 376.5,100.6 374.8,101.0 373.2,100.4 372.4,101.9 371.8,100.8 370.1,100.4 368.2,101.5 365.8,100.9 363.6,100.4 362.2,101.4 360.3,100.4 358.4,100.1 358.2,98.7 356.8,98.1 357.6,97.0 356.5,96.2 356.7,95.4 357.9,94.8 360.8,94.8 361.1,93.8 358.7,94.0Z"/>
<path fill="#c7e5c1" d="M454.2,114.5 454.2,116.8 452.5,116.6 450.8,116.3 449.4,115.4 447.7,115.2 446.1,115.1 444.5,114.5 443.3,113.4 441.7,112.7 443.0,110.8 444.5,110.7 445.9,112.0 447.7,112.7 449.2,113.6 450.8,114.3 452.5,114.2 454.2,114.5Z"/>
<path fill="#f4f8f2" d="M455.3,114.3 455.6,115.6 456.8,116.3 458.5,116.0 460.3,116.0 459.8,114.6 458.0,114.7 456.4,114.0 455.3,114.3Z"/>
<path fill="#c7e5c1" d="M461.2,123.9 460.8,121.1 459.2,121.9 460.0,120.3 460.6,119.0 458.9,118.6 457.1,118.6 456.8,117.5 454.8,116.8 454.3,119.0 455.3,120.1 455.1,122.2 455.6,123.9 457.9,123.8 460.0,123.3 460.8,125.8Z"/>
<path fill="#f4f8f2" d="M460.8,125.8 461.2,123.9 461.9,123.8 462.3,122.2 463.8,120.9 464.4,119.0 465.3,117.0 466.9,116.6 468.2,115.6 468.6,113.8 470.5,114.9 470.9,117.8 470.3,119.4 469.1,120.6 471.2,121.9 471.6,123.6 473.2,124.5 474.8,124.9 473.1,126.3 471.3,126.5 469.8,127.4 469.3,129.3 470.0,131.0 470.7,132.7 470.1,134.5 470.5,136.2 471.6,137.6 472.3,139.8 470.9,142.3 470.5,139.5 469.9,138.0 469.8,136.3 469.4,134.4 469.0,132.4 466.6,132.4 464.2,133.2 464.0,131.6 463.9,130.1 463.4,128.6 462.7,127.2Z"/>
<path fill="#98d094" d="M473.1,126.3 471.3,126.5 469.8,127.4 469.3,129.3 470.0,131.0 470.7,132.7 470.1,134.5 470.5,136.2 471.6,137.6 472.3,139.8 470.9,142.3 470.4,144.0 470.2,145.8 471.6,146.9 472.9,148.2 474.5,149.3 476.2,148.6 474.5,147.5 473.4,146.6 472.6,145.1 472.9,143.4 471.6,143.8 472.1,141.1 472.9,138.7 474.3,137.3 476.4,139.2 477.5,140.0 477.3,138.4 476.8,137.0 478.4,135.7 481.1,135.9 481.6,134.0 480.3,132.4 480.5,130.8 478.4,129.4 476.0,130.2 474.5,130.7 474.9,129.2 474.8,127.7 473.7,127.7 473.1,126.3Z"/>
<path fill="#e0f0dc" d="M473.1,126.3 474.8,124.9 475.6,123.1 476.4,123.1 476.8,124.2 477.9,125.5 480.0,126.3 479.2,127.8 481.1,129.1 481.8,130.6 483.1,131.6 484.7,134.0 484.7,135.2 482.3,135.7 481.1,135.9 481.6,134.0 480.3,132.4 480.5,130.8 478.4,129.4 476.0,130.2 474.5,130.7 474.9,129.2 474.8,127.7 473.7,127.7 473.1,126.3Z"/>
<path fill="#e0f0dc" d="M477.5,140.0 477.3,138.4 476.8,137.0 478.4,135.7 481.1,135.9 482.3,135.7 484.7,135.2 484.6,137.1 484.7,138.9 482.3,140.0 482.2,141.2 480.0,142.0 478.4,141.7 477.6,140.8Z"/>
<path fill="#98d094" d="M485.5,124.5 483.5,122.5 481.2,121.7 479.4,122.2 477.6,123.0 476.4,123.1 476.8,124.2 477.9,125.5 480.0,126.3 479.2,127.8 481.1,129.1 481.8,130.6 483.1,131.6 484.7,134.0 484.7,135.2 484.6,137.1 484.7,138.9 482.3,140.0 482.2,141.2 480.0,142.0 480.5,144.9 481.9,143.5 483.5,142.2 484.7,141.9 487.1,140.3 487.5,137.9 487.1,136.0 486.8,134.0 485.2,133.1 484.2,131.6 482.8,130.1 481.9,127.7 483.5,125.8Z"/>
<path fill="#98d094" d="M472.9,148.2 473.4,149.7 474.2,152.1 474.9,153.8 476.9,154.7 478.4,156.2 479.5,156.0 479.1,154.4 478.3,152.9 478.1,150.5 476.2,148.6 474.5,149.3ZM488.0,155.2 490.5,154.1 493.4,153.2 494.5,152.1 495.7,151.0 496.6,149.5 498.1,148.6 499.7,147.4 500.7,148.7 502.0,149.7 502.8,150.5 500.9,151.8 499.1,152.1 497.3,151.8 496.5,154.5 495.2,155.2 494.2,156.4 491.8,156.2 489.4,157.0 488.0,155.2Z"/>
<path fill="#ffffff" d="M495.3,151.2 496.8,150.5 496.7,151.6Z"/>
<path fill="#98d094" d="M465.5,149.6 467.3,149.5 469.0,150.2 469.9,151.7 471.3,152.7 472.7,153.6 473.7,154.9 475.8,155.9 477.6,157.3 478.9,160.0 480.0,161.2 481.0,162.3 482.3,163.1 482.7,165.3 482.2,167.5 480.0,167.5 478.3,166.4 476.8,165.0 475.5,163.8 474.5,162.3 473.3,160.9 472.9,159.2 471.5,157.7 470.9,155.7 469.4,154.6 468.2,153.2 466.6,151.5ZM481.1,169.1 483.1,167.8 484.6,168.6 486.3,168.6 488.1,168.8 489.9,168.5 491.3,169.4 492.9,169.3 494.5,169.7 495.7,170.7 495.7,172.1 493.7,172.0 491.8,171.5 489.3,171.5 487.1,170.5 485.1,170.7 483.1,170.1ZM488.0,155.2 489.4,157.0 491.8,156.2 494.2,156.4 495.2,155.2 496.5,154.5 497.3,151.8 499.1,152.1 500.9,151.8 498.6,152.6 496.3,153.1 494.1,154.1 491.6,154.3 489.3,155.2 487.1,156.0 487.1,158.4 488.1,159.6 488.6,161.1 490.0,161.9 491.0,163.1 493.4,163.4 495.7,164.7 498.1,164.2 498.3,162.7 498.9,161.2 499.8,159.9 500.5,158.4 501.2,156.8 502.0,154.5 499.7,154.3 497.4,155.2 495.0,154.9 492.7,155.2 490.4,155.1ZM503.6,167.1 503.6,165.5 503.6,163.9 502.7,162.8 503.7,160.3 504.1,157.6 506.0,156.5 507.6,156.3 509.1,157.0 510.8,156.7 512.3,155.9 511.5,157.8 509.1,157.8 507.5,157.4 506.0,157.8 504.7,159.8 506.8,159.8 509.6,159.8 507.5,161.2 507.1,163.1 508.3,163.6 509.1,165.5 507.5,165.8 506.4,164.7 506.0,163.1 505.2,164.7 505.0,167.1ZM521.7,159.7 524.1,159.8 526.4,159.7 527.6,161.5 528.0,163.6 530.1,162.5 532.0,160.9 534.7,161.9 537.5,162.5 537.5,165.1 537.7,167.6 537.7,170.2 537.5,172.7 536.0,171.7 534.3,171.0 532.8,171.6 532.4,169.4 531.3,167.4 529.6,165.8 527.6,165.4 525.7,164.7 524.6,163.1 526.4,162.3 523.6,161.9ZM496.5,171.3 497.6,171.6 496.8,172.3ZM498.1,171.5 499.2,171.6 498.6,172.4ZM499.4,171.8 501.1,171.2 502.8,171.5 502.0,172.3 499.7,172.6ZM504.1,171.6 506.6,171.0 509.1,171.3 508.8,172.1 506.6,172.6 504.4,172.3ZM502.8,173.4 505.7,174.0 504.4,174.5ZM509.9,174.6 510.8,173.0 512.3,171.9 512.3,173.2 510.7,174.5ZM516.2,155.6 517.0,156.8 518.1,156.4 517.0,157.9 516.7,159.7 516.1,157.9ZM513.8,163.3 515.7,163.6 515.1,164.4 513.8,164.1ZM517.0,163.0 519.0,162.9 520.9,163.3 521.4,164.2 519.3,164.4 517.3,163.9ZM481.9,160.9 483.5,162.3 482.3,163.1ZM484.9,162.5 485.8,163.3 485.0,163.4ZM468.5,156.2 469.6,157.5 468.8,157.0ZM470.9,160.0 471.8,161.2 471.2,161.1ZM526.8,167.5 527.6,168.6 526.8,169.1ZM521.7,170.4 522.8,169.7 522.5,171.0Z"/>
<path fill="#ffffff" d="M512.3,171.9 515.7,171.6 512.3,173.2Z"/>
<path fill="#f4f8f2" d="M537.5,162.5 539.2,163.5 541.0,164.3 543.0,164.4 544.5,165.4 545.3,167.1 548.2,167.8 547.2,169.4 548.7,170.7 549.3,172.6 550.9,174.0 552.9,174.9 550.8,174.2 548.5,174.5 547.5,173.2 546.1,172.3 544.7,171.1 543.0,170.5 541.4,172.3 539.5,172.6 537.5,172.7 537.7,170.2 537.7,167.6 537.5,165.1ZM549.3,167.1 550.9,167.3 552.4,167.1 553.6,165.7 555.1,165.0 554.0,167.1 551.6,168.3ZM553.2,162.7 556.1,164.7 555.6,163.4ZM559.1,167.1 560.8,169.0 559.8,167.8Z"/>
<path fill="#ffffff" d="M505.2,129.3 507.9,129.3 507.4,130.8 507.9,132.4 506.8,134.8 507.5,136.3 509.0,137.4 510.7,137.9 510.7,138.6 508.3,137.1 506.0,136.8 504.9,135.2 504.1,132.9 505.0,131.6ZM507.5,147.4 508.6,146.0 509.9,144.9 511.6,144.0 513.1,143.0 514.0,144.7 514.6,146.6 513.8,148.5 512.9,149.6 510.7,148.2 509.9,146.3ZM511.2,138.7 513.1,139.0 513.4,140.9 512.3,140.8 511.5,141.5 511.2,140.3ZM507.5,139.8 509.4,140.3 509.1,142.0 508.3,143.0 507.4,141.9ZM509.9,141.4 510.7,141.4 509.9,143.6ZM505.2,137.3 506.8,137.6 506.3,139.0ZM500.1,145.0 502.2,143.1 503.6,140.6 503.1,142.0 502.2,143.6 500.9,144.9Z"/>
<path fill="#c7e5c1" d="M294.6,114.8 297.3,113.5 299.6,111.9 300.1,109.6 301.3,107.9 302.0,106.0 304.7,104.9 305.4,103.4 306.1,102.0 308.1,102.0 310.0,102.5 311.9,103.1 312.7,105.6 313.5,107.7 311.9,109.1 309.9,109.6 307.5,111.2 305.7,112.1 303.8,112.8 301.7,113.2 301.7,114.8 299.3,114.3 297.0,114.9Z"/>
<path fill="#c7e5c1" d="M294.6,114.8 297.0,114.9 299.3,114.3 301.7,114.8 301.7,117.5 299.1,117.0 296.5,117.5 296.1,119.4 296.5,121.4 294.9,122.2 294.9,124.9 292.8,124.8 290.7,125.0 288.6,124.9 288.6,125.3 289.8,123.5 290.2,121.4 290.9,119.7 292.1,118.2 293.1,116.3Z"/>
<path fill="#f4f8f2" d="M288.6,125.3 290.7,125.4 292.8,124.9 294.9,124.9 294.9,122.2 296.5,121.4 296.1,119.4 296.5,117.5 299.1,117.0 301.7,117.5 301.7,115.4 303.8,116.6 305.7,118.0 307.8,119.0 305.2,119.2 305.2,121.4 305.2,123.6 305.5,125.8 305.7,128.0 305.9,130.3 306.6,132.4 307.1,134.0 304.8,133.8 302.6,133.9 300.4,134.1 298.4,134.5 297.3,133.8 296.2,135.1 294.5,133.7 292.9,132.3 291.2,133.0 289.4,133.2 290.0,131.7 289.7,130.1 289.9,127.7Z"/>
<path fill="#e0f0dc" d="M289.4,133.2 291.2,133.0 292.9,132.3 294.5,133.7 296.2,135.1 297.2,136.9 297.3,138.9 295.6,138.3 293.8,138.6 291.5,138.7 289.1,138.9 288.9,137.6 287.8,135.2Z"/>
<path fill="#5aab5a" d="M288.9,137.0 291.8,136.7 293.7,137.1 291.8,137.6 288.9,137.8Z"/>
<path fill="#f4f8f2" d="M289.1,138.9 291.5,138.7 293.8,138.6 293.8,140.0 291.8,141.2 290.1,140.5Z"/>
<path fill="#e0f0dc" d="M291.8,141.2 293.8,140.0 293.8,138.6 295.6,138.3 297.3,138.9 299.6,139.2 301.3,139.7 302.3,141.1 302.8,142.3 302.5,145.0 302.0,146.4 300.6,146.7 300.4,145.2 299.2,145.0 298.5,143.8 297.8,142.7 295.7,142.8 294.5,144.2 293.0,142.8Z"/>
<path fill="#f4f8f2" d="M294.5,144.2 295.7,142.8 297.8,142.7 298.5,143.8 299.2,145.0 298.5,146.4 297.4,147.5 296.2,145.7Z"/>
<path fill="#f4f8f2" d="M297.4,147.5 298.5,146.4 299.2,145.0 300.4,145.2 300.6,146.7 302.0,146.4 303.0,148.9 303.6,151.5 301.2,150.5 299.3,149.1Z"/>
<path fill="#c7e5c1" d="M303.6,151.5 303.0,148.9 302.0,146.4 302.5,145.0 302.8,142.3 305.6,141.7 306.7,142.0 308.0,143.1 309.5,143.6 311.1,143.4 310.5,145.5 310.4,147.7 310.5,150.4 307.5,150.4 305.5,150.6Z"/>
<path fill="#c7e5c1" d="M310.5,150.4 310.4,147.7 310.5,145.5 311.1,143.4 310.8,141.1 313.0,141.2 315.1,140.9 316.2,143.4 316.5,145.3 316.2,147.4 317.3,148.8 315.4,149.4 314.0,150.6 312.2,150.8Z"/>
<path fill="#e0f0dc" d="M317.3,148.8 316.2,147.4 316.5,145.3 316.2,143.4 315.1,140.9 316.8,141.1 317.7,142.5 317.9,144.2 317.8,146.4 317.9,148.6Z"/>
<path fill="#c7e5c1" d="M317.9,148.6 317.8,146.4 317.9,144.2 317.7,142.5 316.8,141.1 317.9,139.9 319.2,139.0 321.1,140.0 321.4,141.9 320.7,143.9 319.7,145.8 319.7,148.3Z"/>
<path fill="#e0f0dc" d="M306.7,142.0 307.1,139.8 308.6,137.8 309.7,136.4 311.5,135.9 313.2,135.7 314.6,134.8 315.7,134.9 317.5,136.7 318.9,138.7 319.2,139.0 317.9,139.9 316.8,141.1 315.1,140.9 313.0,141.2 310.8,141.1 311.1,143.4 309.5,143.6 308.0,143.1Z"/>
<path fill="#e0f0dc" d="M296.2,135.1 297.3,133.8 298.4,134.5 300.4,134.1 302.6,133.9 304.8,133.8 307.1,134.0 306.6,132.4 305.9,130.3 305.7,128.0 305.5,125.8 305.2,123.6 305.2,121.4 305.2,119.2 307.8,119.0 309.9,120.0 311.5,121.6 313.3,123.0 315.1,124.3 317.3,125.2 317.3,125.8 318.6,127.0 320.4,127.2 320.6,128.5 322.0,128.3 322.4,130.1 322.0,131.9 320.9,134.0 319.2,134.5 317.4,134.3 315.7,134.9 314.6,134.8 313.2,135.7 311.5,135.9 309.7,136.4 308.6,137.8 307.1,139.8 306.7,142.0 305.6,141.7 302.8,142.3 302.3,141.1 301.3,139.7 299.6,139.2 297.3,138.9 297.2,136.9Z"/>
<path fill="#c7e5c1" d="M311.9,103.1 313.8,102.8 315.4,101.9 317.7,101.0 320.1,100.4 322.2,100.4 324.3,99.9 326.4,100.1 328.9,100.3 328.3,101.9 328.3,103.7 327.2,105.2 328.3,106.6 329.6,107.8 330.4,110.7 331.1,112.4 331.0,114.3 330.2,117.0 331.1,119.8 333.0,120.1 334.3,121.4 332.3,122.0 330.8,123.5 329.1,124.7 327.2,125.5 325.8,126.5 324.5,127.7 322.0,128.3 320.6,128.5 320.4,127.2 318.6,127.0 317.3,125.8 317.3,125.2 315.1,124.3 313.3,123.0 311.5,121.6 309.9,120.0 307.8,119.0 305.7,118.0 303.8,116.6 301.7,115.4 301.7,113.2 303.8,112.8 305.7,112.1 307.5,111.2 309.9,109.6 311.9,109.1 313.5,107.7 312.7,105.6 311.9,103.1Z"/>
<path fill="#c7e5c1" d="M328.9,100.3 330.8,99.7 332.7,100.1 331.9,102.2 332.7,104.1 331.1,104.9 333.5,106.1 333.5,107.2 331.6,108.3 331.5,110.4 330.4,110.7 329.6,107.8 328.3,106.6 327.2,105.2 328.3,103.7 328.3,101.9 328.9,100.3Z"/>
<path fill="#c7e5c1" d="M333.5,106.1 335.9,106.6 337.7,106.8 339.3,107.5 340.6,109.1 342.2,109.4 343.8,110.0 346.1,110.5 346.9,108.8 347.1,106.9 348.5,106.5 350.0,106.6 352.4,107.7 355.1,108.6 354.3,111.2 354.8,112.4 354.4,114.7 354.4,116.9 354.3,119.2 354.5,121.5 354.8,123.8 354.7,125.3 354.8,126.9 353.2,126.9 353.2,127.7 351.0,126.8 349.1,125.5 346.8,124.6 344.6,123.9 342.6,122.6 340.6,121.4 339.0,122.2 337.8,122.8 336.2,121.7 334.3,121.4 333.0,120.1 331.1,119.8 330.2,117.0 331.0,114.3 331.1,112.4 330.4,110.7 331.5,110.4 331.6,108.3 333.5,107.2 333.5,106.1Z"/>
<path fill="#5aab5a" d="M355.1,108.6 356.9,109.1 358.7,109.3 360.4,109.0 361.9,109.7 364.2,108.8 366.3,109.3 369.3,109.1 370.3,110.3 370.4,111.9 369.3,114.6 367.7,113.5 366.7,111.3 366.9,113.0 367.9,114.3 368.6,115.7 369.9,117.4 370.5,119.3 371.5,120.8 372.2,122.4 373.5,123.8 371.2,123.6 368.8,124.2 366.5,124.3 364.1,123.4 361.8,123.5 359.5,124.2 357.1,123.5 354.8,123.8 354.5,121.5 354.3,119.2 354.4,116.9 354.4,114.7 354.8,112.4 354.3,111.2 355.1,108.6Z"/>
<path fill="#c7e5c1" d="M354.8,123.8 357.1,123.5 359.5,124.2 361.8,123.5 364.1,123.4 366.5,124.3 368.8,124.2 371.2,123.6 373.5,123.8 374.0,125.3 373.5,126.9 374.1,128.5 376.2,130.1 373.7,131.6 373.8,133.3 372.9,134.8 372.7,135.9 372.3,138.4 370.5,139.8 369.4,141.7 368.9,143.4 369.1,145.0 367.4,146.0 368.9,148.0 370.5,149.9 371.9,151.2 370.4,151.3 368.9,151.8 366.6,152.1 364.2,152.6 363.9,152.9 361.9,151.3 360.4,150.5 358.7,150.5 358.2,150.1 356.5,148.5 355.2,146.6 353.5,145.3 352.4,144.7 352.4,142.7 351.5,141.1 350.4,138.4 350.0,136.7 350.8,136.0 351.6,133.7 353.2,133.7 352.7,131.7 353.2,129.7 353.2,127.7 353.2,126.9 354.8,126.9 354.7,125.3 354.8,123.8Z"/>
<path fill="#f4f8f2" d="M339.0,122.2 340.6,121.4 342.6,122.6 344.6,123.9 346.8,124.6 349.1,125.5 351.0,126.8 353.2,127.7 353.2,127.7 353.2,129.7 352.7,131.7 353.2,133.7 351.6,133.7 350.8,136.0 350.0,136.7 350.4,138.4 351.5,141.1 349.6,141.9 347.4,143.0 345.3,144.2 344.3,145.3 343.0,146.1 341.3,146.0 339.8,146.6 338.2,144.2 337.3,142.7 339.2,142.7 339.2,140.9 339.0,139.2 337.6,137.9 336.8,136.8 336.7,135.6 338.0,133.5 339.8,131.8 340.0,129.0 340.4,126.3 339.6,124.3 339.0,122.2Z"/>
<path fill="#f4f8f2" d="M322.0,128.3 324.5,127.7 325.8,126.5 327.2,125.5 329.1,124.7 330.8,123.5 332.3,122.0 334.3,121.4 334.3,121.4 336.2,121.7 337.8,122.8 339.0,122.2 339.6,124.3 340.4,126.3 340.0,129.0 339.8,131.8 338.0,133.5 336.7,135.6 336.8,136.8 335.1,137.8 333.1,138.0 331.1,137.5 329.4,137.3 327.7,137.5 326.1,137.9 324.1,136.5 321.9,137.1 321.1,140.0 319.2,139.0 318.9,138.7 317.5,136.7 315.7,134.9 317.4,134.3 319.2,134.5 320.9,134.0 322.0,131.9 322.4,130.1 322.0,128.3Z"/>
<path fill="#98d094" d="M319.7,148.3 319.7,145.8 320.7,143.9 321.4,141.9 321.1,140.0 321.9,137.1 324.1,136.5 326.1,137.9 327.7,137.5 329.4,137.3 331.1,137.5 333.1,138.0 335.1,137.8 336.8,136.8 337.6,137.9 338.4,140.3 337.3,141.1 336.2,143.4 334.6,145.2 333.5,147.5 331.9,147.4 330.8,148.2 329.3,149.3 328.9,151.3 326.4,151.5 324.9,151.6 323.4,150.3 322.5,148.5Z"/>
<path fill="#c7e5c1" d="M328.9,151.3 329.3,149.3 330.8,148.2 331.9,147.4 333.5,147.5 334.6,145.2 336.2,143.4 337.3,141.1 338.4,140.3 337.6,137.9 337.6,137.9 339.0,139.2 339.2,140.9 339.2,142.7 337.3,142.7 338.2,144.2 339.8,146.6 338.2,149.0 338.6,151.3 340.2,152.9 340.9,154.9 338.6,154.5 336.3,154.9 334.8,155.0 333.2,154.9 330.8,154.8 330.8,153.2 330.4,152.1Z"/>
<path fill="#f4f8f2" d="M339.8,146.6 341.3,146.0 343.0,146.1 344.3,145.3 345.3,144.2 347.4,143.0 349.6,141.9 351.5,141.1 351.5,141.1 352.4,142.7 352.4,144.7 353.5,145.3 355.2,146.6 356.5,148.5 358.2,150.1 358.7,150.5 357.1,150.6 355.6,150.2 354.0,150.4 352.3,150.9 350.8,151.8 349.3,151.4 347.7,151.3 346.1,150.4 344.7,151.6 344.7,152.9 343.0,152.7 341.5,152.9 340.9,154.9 340.2,152.9 338.6,151.3 338.2,149.0 339.8,146.6Z"/>
<path fill="#f4f8f2" d="M330.8,154.8 333.2,154.9 333.2,156.8 330.8,156.8Z"/>
<path fill="#e0f0dc" d="M330.8,156.8 333.2,156.8 333.2,154.9 334.8,155.0 336.3,154.9 336.2,156.4 337.8,156.2 338.0,157.7 338.2,159.2 337.3,162.0 335.1,162.0 333.7,162.5 334.0,164.1 332.7,164.5 331.3,163.8 330.7,162.3 329.6,159.7 330.4,157.6Z"/>
<path fill="#c7e5c1" d="M332.7,164.5 334.0,164.1 333.7,162.5 335.1,162.0 337.3,162.0 338.2,159.2 338.0,157.7 337.8,156.2 336.2,156.4 336.3,154.9 338.6,154.5 340.9,154.9 341.5,152.9 343.1,152.5 344.7,152.9 343.8,155.2 343.5,157.2 343.3,159.2 341.7,160.0 340.9,161.6 340.6,163.9 339.7,165.3 338.2,166.1 336.7,165.8 335.6,165.5 334.6,166.3 334.0,165.6Z"/>
<path fill="#c7e5c1" d="M334.6,166.3 334.8,168.0 335.9,167.7 338.6,168.0 341.4,167.7 342.2,170.2 344.1,170.1 346.1,170.2 346.9,169.4 349.7,169.9 350.0,172.6 350.4,174.3 350.0,176.0 351.6,175.5 353.2,175.7 355.2,176.4 356.4,177.1 358.7,177.6 360.1,178.3 361.1,179.5 362.3,177.6 360.1,177.1 360.2,175.4 360.4,173.7 360.9,171.8 363.8,171.5 362.7,169.7 361.9,167.8 361.4,165.2 361.4,162.7 362.0,160.6 362.6,159.2 362.5,157.6 363.9,156.6 364.5,154.9 363.9,152.9 361.9,151.3 360.4,150.5 358.7,150.5 357.1,150.6 355.6,150.2 354.0,150.4 352.3,150.9 350.8,151.8 349.3,151.4 347.7,151.3 346.1,150.4 344.7,151.6 344.7,152.9 343.8,155.2 343.5,157.2 343.3,159.2 341.7,160.0 340.9,161.6 340.6,163.9 339.7,165.3 338.2,166.1 336.7,165.8 335.6,165.5 334.6,166.3Z"/>
<path fill="#f4f8f2" d="M334.8,168.0 335.9,167.7 338.6,168.0 341.4,167.7 342.2,170.2 344.1,170.1 346.1,170.2 346.9,169.4 349.7,169.9 350.0,172.6 350.4,174.3 350.0,176.0 351.6,175.5 353.2,175.7 353.5,177.3 353.2,178.9 351.6,179.2 350.0,178.9 350.0,181.4 350.0,183.9 350.9,185.2 352.1,186.1 349.3,186.8 347.0,186.0 344.5,185.8 342.2,185.9 339.8,186.4 337.4,185.8 335.7,185.5 334.0,185.6 334.0,183.3 334.9,181.6 335.1,179.7 335.8,177.6 337.1,175.7 336.7,174.2 336.3,172.6 335.9,170.2ZM334.6,166.3 335.6,165.5 334.6,167.5Z"/>
<path fill="#c7e5c1" d="M352.1,186.1 350.9,185.2 350.0,183.9 350.0,181.4 350.0,178.9 351.6,179.2 353.2,178.9 353.5,177.3 353.2,175.7 355.2,176.4 356.4,177.1 358.7,177.6 360.1,178.3 361.1,179.5 362.3,177.6 360.1,177.1 360.2,175.4 360.4,173.7 360.9,171.8 363.8,171.5 365.6,172.1 367.2,173.2 367.7,175.4 367.8,178.1 366.9,179.8 367.7,180.5 365.4,181.5 363.0,182.0 363.3,183.1 360.9,183.6 359.5,185.2 357.9,186.6 355.2,186.4 353.6,186.7 352.1,186.1Z"/>
<path fill="#c7e5c1" d="M355.2,186.4 357.9,186.6 359.5,185.2 360.9,183.6 363.3,183.1 365.4,183.5 367.2,184.7 367.2,187.5 367.1,189.1 366.9,190.7 366.1,192.4 364.7,193.7 363.2,193.3 361.7,193.4 360.2,192.1 359.0,190.7 356.7,189.3 356.4,187.6Z"/>
<path fill="#c7e5c1" d="M346.9,193.1 347.0,195.3 346.9,197.5 347.1,199.3 348.2,200.8 349.9,200.0 351.2,198.6 353.4,198.6 355.6,198.9 356.3,197.0 357.8,195.7 359.6,194.2 361.7,193.4 360.2,192.1 359.0,190.7 356.7,189.3 356.4,187.6 355.2,186.4 353.6,186.7 352.1,186.1 349.3,186.8 348.5,187.2 348.0,189.2 348.6,191.1 348.5,193.1Z"/>
<path fill="#c7e5c1" d="M334.0,185.6 335.7,185.5 337.4,185.8 339.8,186.4 342.2,185.9 344.5,185.8 347.0,186.0 349.3,186.8 352.1,186.1 349.8,185.7 347.6,185.7 345.3,185.9 343.0,185.9 340.8,186.1 338.5,186.0 336.2,185.9 334.0,185.6 334.3,186.8 335.0,188.9 336.3,190.7 336.8,192.5 338.2,193.8 338.2,196.2 339.3,198.4 339.5,200.9 340.0,202.5 341.4,203.4 343.0,203.8 345.0,203.7 346.9,203.1 347.3,200.3 346.9,197.5 347.0,195.3 346.9,193.1 348.5,193.1 348.6,191.1 348.0,189.2 348.5,187.2 349.3,186.8 352.1,186.1 353.6,186.7 355.2,186.4 353.6,186.7 352.1,186.1 349.8,185.7 347.6,185.7 345.3,185.9 343.0,185.9 340.8,186.1 338.5,186.0 336.2,185.9Z"/>
<path fill="#5aab5a" d="M341.4,203.4 343.0,203.8 345.0,203.7 346.9,203.1 347.3,200.3 346.9,197.5 347.1,199.3 348.2,200.8 349.9,200.0 351.2,198.6 353.4,198.6 355.6,198.9 356.3,197.0 357.8,195.7 359.6,194.2 361.7,193.4 363.2,193.3 364.7,193.7 365.6,195.2 365.8,197.0 366.3,198.8 365.8,200.6 367.2,200.8 366.6,203.3 364.7,205.3 363.9,206.7 362.6,207.7 361.0,208.6 360.0,210.1 358.5,210.8 357.1,211.6 354.8,211.9 352.8,212.1 350.8,212.1 348.8,212.5 346.9,213.2 344.5,212.3 344.2,209.6 343.4,208.0 342.6,206.4 341.7,205.1Z"/>
<path fill="#e0f0dc" d="M357.9,205.0 360.4,203.4 361.7,204.9 359.8,206.6Z"/>
<path fill="#c7e5c1" d="M364.2,199.0 365.8,199.4 365.8,200.6 364.2,201.2Z"/>
<path fill="#c7e5c1" d="M379.0,174.9 379.6,176.5 379.3,178.1 379.2,180.1 379.7,182.0 378.4,183.0 377.6,184.4 375.5,185.1 373.7,186.4 372.2,188.0 370.8,189.6 370.1,190.7 371.3,193.1 371.7,194.6 371.2,196.2 369.0,196.8 367.4,198.2 367.2,200.8 365.8,200.6 366.3,198.8 365.8,197.0 365.6,195.2 364.7,193.7 366.1,192.4 366.9,190.7 367.1,189.1 367.2,187.5 367.2,184.7 365.4,183.5 363.3,183.1 363.0,182.0 365.4,181.5 367.7,180.5 369.7,181.4 369.4,183.6 370.8,185.3 371.9,184.4 371.8,181.6 369.7,179.7 369.7,178.1 370.4,176.7 372.4,176.3 374.5,176.8 376.9,176.2Z"/>
<path fill="#c7e5c1" d="M367.2,173.2 368.9,173.4 369.6,175.0 370.4,176.7 369.7,178.1 369.7,179.7 371.8,181.6 371.9,184.4 370.8,185.3 369.4,183.6 369.7,181.4 367.7,180.5 366.9,179.8 367.8,178.1 367.7,175.4Z"/>
<path fill="#c7e5c1" d="M377.1,165.8 375.6,165.2 374.6,163.9 374.8,163.1 373.1,161.6 371.0,160.9 368.9,160.0 366.4,159.9 363.9,160.0 363.4,162.2 363.9,163.6 361.7,165.5 361.9,167.8 362.7,169.7 363.8,171.5 365.6,172.1 367.2,173.2 368.9,173.4 369.6,175.0 370.4,176.7 372.4,176.3 374.5,176.8 376.9,176.2 379.0,174.9 378.0,173.7 377.3,172.3 377.6,169.4 376.5,167.8Z"/>
<path fill="#c7e5c1" d="M380.9,161.1 380.0,158.4 380.0,156.2 380.0,154.0 381.4,152.3 379.7,152.1 378.1,152.3 375.4,152.7 373.7,152.3 372.1,151.5 371.9,151.2 370.4,151.3 368.9,151.8 369.8,153.7 370.5,155.7 369.5,156.9 368.9,158.4 368.9,160.0 371.0,160.9 373.1,161.6 374.8,163.1 374.6,163.9 375.6,165.2 377.1,165.8 377.8,164.9 379.2,162.5Z"/>
<path fill="#c7e5c1" d="M368.9,151.8 366.6,152.1 364.2,152.6 363.9,152.9 364.5,154.9 363.9,156.6 362.5,157.6 362.6,159.2 362.0,160.6 363.9,160.0 366.4,159.9 368.9,160.0 368.9,158.4 369.5,156.9 370.5,155.7 369.8,153.7Z"/>
<path fill="#c7e5c1" d="M362.0,160.6 361.4,162.7 363.4,162.2 363.9,160.0Z"/>
<path fill="#f4f8f2" d="M361.4,162.7 361.4,165.2 361.7,165.5 363.9,163.6 363.4,162.2Z"/>
<path fill="#c7e5c1" d="M372.7,135.9 375.1,135.1 376.8,135.4 378.3,135.8 379.8,136.2 380.6,137.8 382.2,138.7 381.2,141.1 383.0,141.2 382.7,141.7 383.7,143.0 384.7,144.2 387.2,144.5 389.4,145.8 391.0,145.8 389.7,147.6 387.8,148.9 386.3,150.5 383.9,150.8 381.4,152.3 379.7,152.1 378.1,152.3 375.4,152.7 373.7,152.3 372.1,151.5 371.9,151.2 370.5,149.9 368.9,148.0 367.4,146.0 369.1,145.0 368.9,143.4 369.4,141.7 370.5,139.8 372.3,138.4Z"/>
<path fill="#f4f8f2" d="M376.2,130.1 373.7,131.6 373.8,133.3 372.9,134.8 372.7,135.9 375.1,135.1 376.8,135.4 378.3,135.8 379.8,136.2 380.6,137.8 382.2,138.7 383.3,138.4 382.0,137.9 380.9,136.1 379.2,134.9 377.3,133.2 377.3,131.4Z"/>
<path fill="#f4f8f2" d="M383.3,138.4 382.2,138.7 381.2,141.1 383.0,141.2 383.4,140.3Z"/>
<path fill="#f4f8f2" d="M383.4,140.3 383.0,141.2 382.7,141.7 383.7,143.0 384.7,144.2 387.2,144.5 389.4,145.8 391.0,145.8 389.7,147.6 387.8,148.9 386.3,150.5 383.9,150.8 381.4,152.3 380.0,154.0 380.0,156.2 380.0,158.4 380.9,161.1 381.5,159.8 382.8,158.0 384.7,156.8 386.3,155.4 388.2,154.3 389.5,152.2 391.3,150.5 393.0,148.3 394.1,145.8 394.7,143.9 395.6,142.2 396.0,139.7 394.2,139.8 392.6,140.6 391.0,141.1 389.4,140.8 387.3,141.1 385.5,142.0Z"/>
<path fill="#e0f0dc" d="M393.0,177.3 394.0,179.0 394.0,181.1 394.9,182.8 394.4,184.5 393.4,186.0 393.1,188.1 392.1,190.1 391.5,192.1 390.9,194.2 390.2,196.2 389.4,197.8 386.6,198.6 385.1,197.7 384.2,196.2 383.8,194.7 383.6,193.1 384.8,191.7 385.5,189.9 385.3,187.9 384.7,186.0 386.3,183.6 387.9,183.5 389.4,182.8 391.0,180.5 392.3,178.1Z"/>
<path fill="#ffffff" d="M275.7,131.6 276.2,131.5 276.0,131.9ZM278.1,134.5 278.5,134.6 278.2,134.9ZM288.8,113.8 289.9,113.5 289.3,114.3ZM290.5,114.1 291.1,114.3 290.8,114.6ZM288.6,106.7 289.1,106.7 288.8,107.1ZM405.6,190.2 406.4,190.4 406.0,190.7ZM402.5,191.5 403.3,191.6 402.8,192.1ZM383.4,176.5 383.9,177.0 383.6,177.3ZM325.6,157.9 326.0,158.1 325.8,158.4ZM328.9,152.6 329.4,152.9 328.9,153.2ZM377.1,167.8 377.6,168.2 377.3,168.5Z"/>
<path fill="#286a28" d="M495.1,192.7 497.3,192.1 499.2,190.8 501.1,190.7 502.8,189.9 504.7,189.2 506.8,189.1 507.9,186.8 509.9,185.6 510.1,183.9 512.3,182.8 514.0,180.5 516.5,180.8 517.6,181.9 519.5,181.9 519.8,179.7 521.1,177.9 522.5,177.2 524.1,177.5 524.2,176.4 526.2,177.3 528.3,177.5 531.0,177.6 529.6,179.7 528.8,181.9 531.2,183.3 532.7,184.8 534.6,185.8 537.2,186.0 538.3,184.2 538.4,182.0 538.4,180.4 538.4,178.7 539.5,177.1 539.8,175.3 540.9,176.8 541.4,178.6 541.7,181.1 544.2,181.9 544.7,183.9 545.3,186.0 545.8,188.2 547.6,189.1 549.3,190.1 550.6,191.6 551.2,193.5 552.9,194.2 553.5,196.0 555.0,197.2 556.4,198.6 556.5,201.2 557.3,203.4 556.5,205.2 556.4,207.2 555.6,209.6 553.7,211.6 552.8,213.8 551.6,216.4 551.5,217.5 549.9,218.2 548.2,218.1 547.1,219.1 545.8,220.0 543.8,218.7 541.4,219.5 539.7,219.5 538.3,218.7 536.7,218.2 535.3,215.9 533.5,214.5 533.4,212.8 532.8,211.2 532.3,209.7 532.0,211.9 530.9,213.8 529.3,213.2 528.3,212.7 527.3,211.6 526.8,210.1 524.1,208.8 522.0,208.0 520.3,207.9 518.6,208.3 516.1,208.3 513.8,209.3 511.2,210.4 509.9,211.8 508.3,211.9 506.8,211.6 504.1,211.9 502.8,213.0 501.2,213.5 498.9,213.5 496.5,212.4 496.6,210.5 497.6,208.8 496.8,206.4 496.1,205.0 495.9,203.4 494.7,202.1 494.3,200.3 494.2,198.6 494.3,197.0 494.6,194.6ZM543.3,222.7 546.1,223.1 549.0,222.8 548.8,224.9 547.7,226.4 546.1,227.1 544.6,225.8 544.1,224.2ZM530.5,214.6 532.8,214.8 531.2,215.3ZM520.5,176.4 522.2,176.2 521.4,177.0Z"/>
<path fill="#5aab5a" d="M587.4,212.6 589.9,214.0 591.8,216.0 592.6,217.6 594.6,217.2 596.5,217.8 595.6,220.1 594.2,220.6 593.9,222.2 591.5,223.9 590.6,223.3 591.0,221.4 589.1,220.3 590.6,218.2 590.2,215.9 589.2,214.6 587.9,213.5ZM587.4,222.2 588.7,223.1 589.8,224.2 587.9,226.1 587.6,227.4 585.0,228.5 584.3,230.7 582.4,231.8 580.5,231.8 577.6,230.9 578.4,229.3 580.8,227.7 582.4,227.1 583.9,226.1 585.5,224.2ZM579.4,232.3 580.3,232.3 579.7,232.9Z"/>
<path fill="#ffffff" d="M566.6,171.0 568.7,172.6 567.4,171.6ZM561.9,169.4 563.5,170.4 562.7,169.7ZM568.2,173.4 569.8,174.6 569.0,173.8ZM570.2,174.6 571.0,175.4 570.2,175.3ZM573.7,190.1 575.6,192.0 578.1,193.1 577.6,193.5 576.0,192.1 574.2,191.0ZM578.0,182.0 578.7,183.1 578.1,183.0ZM579.1,183.9 579.7,184.4 579.1,184.5ZM580.3,186.1 580.8,186.4 580.3,186.6ZM594.6,186.0 596.7,186.3 595.8,187.1 594.6,186.8ZM597.0,184.4 598.7,183.9 597.8,184.9ZM43.4,179.7 44.2,179.8 43.7,180.1ZM543.3,137.1 543.6,137.3 543.5,137.6ZM527.2,146.4 527.6,146.7 527.2,146.9ZM564.4,147.4 564.7,147.5 564.6,147.7ZM554.5,146.7 554.8,146.9 554.6,147.1ZM584.9,147.2 585.4,147.2 585.0,147.4ZM587.9,156.2 588.0,156.4 587.9,156.5ZM39.3,191.6 39.8,191.8 39.5,191.9ZM79.8,186.0 80.4,186.3 79.9,186.4ZM94.6,172.3 95.1,172.4 94.7,172.6ZM143.1,201.1 143.4,201.1 143.3,201.2Z"/>
</g></svg><!--MAPEND--><!--CTRL--><svg class="abs" style="left:236px;top:72px" width="38" height="106" viewBox="236 72 38 106">
<g fill="#064806"><rect x="246" y="75" width="16" height="48" rx="8"/><rect x="238" y="91" width="33" height="16.4" rx="8.2"/><rect x="246" y="127.7" width="16" height="48.3" rx="8"/></g>
<g fill="#fff"><path d="M254 78.6l4.6 7.6h-9.2z"/><path d="M254 119.6l4.6-7.6h-9.2z"/><path d="M241.6 99.2l7.4-4.4v8.8z"/><path d="M267.4 99.2l-7.4-4.4v8.8z"/>
<rect x="249.6" y="135.3" width="8.8" height="1.9"/><rect x="253.05" y="131.9" width="1.9" height="8.8"/><rect x="249.6" y="166" width="8.8" height="1.9"/></g>
<circle cx="254.2" cy="152" r="7" fill="#1d5a2a"/>
<g fill="none" stroke="#c6c8ee" stroke-width="0.9"><circle cx="254.2" cy="152" r="6.9"/><ellipse cx="254.2" cy="152" rx="3.4" ry="6.9"/><ellipse cx="254.2" cy="152" rx="6.9" ry="3.4"/><path d="M247.3 152h13.8M254.2 145.1v13.8"/></g>
<g fill="#6f74d8"><circle cx="254.2" cy="145" r="0.9"/><circle cx="254.2" cy="159" r="0.9"/><circle cx="247.2" cy="152" r="0.9"/><circle cx="261.2" cy="152" r="0.9"/></g>
</svg><!--/CTRL-->
<div class="abs" style="left:230px;top:365px;width:136px;height:18px;background:linear-gradient(90deg,#fff 0%,#fff 3%,#148214 85%,#004a00 100%)"></div>
<div class="abs" style="left:231px;top:365px;font-size:11px;color:#111">0</div>
<div class="abs" style="left:312px;top:365px;font-size:11px;color:#111">81,917</div>
<div class="abs hl" style="left:222px;top:392px;width:644px"></div>
<div class="abs bt" style="left:240px;top:400px">Report View by Selection</div>
<div class="abs link" style="right:21.5px;top:400px;font-size:13.4px">Customize</div>
<div class="abs" style="left:222px;top:424px;width:639px;height:34px;background:#f2f2f2"></div><div class="abs" style="left:222px;top:424px;width:644px;height:1px;background:#d0d0d0"></div>
<div class="abs th" style="left:234px;top:429px;text-align:left">Total:<br>991</div>
<div class="abs th" style="left:307px;top:434.7px">Institutions</div>
<div class="abs th" style="left:410px;top:434.7px">Countries/Regions</div>
<div class="abs th" style="left:538.5px;top:429px;text-align:left">Web of Science<br><span style="margin-left:8px">Documents</span></div>
<div class="abs th" style="left:665px;top:434px;color:#3f6fa8;font-weight:normal;font-size:13.3px">Cites</div>
<svg class="abs" style="left:699.5px;top:438.5px" width="7.4" height="4.6" viewBox="0 0 8 5"><path d="M0 0h8L4 5z" fill="#5b8fd0"/></svg>
<div class="abs th" style="left:753px;top:434.7px">Cites/Paper</div>
<div class="abs red" style="left:230px;top:416px;width:45px;height:48px"></div>

<div class="abs" id="tb">
<div class="r" style="top:-34.1px;height:47.0px;background:#f3f3f3"><span class="i" style="top:7.2px">MASSACHUSETTS<br>INSTITUTE OF<br>TECHNOLOGY</span></div>
<div class="r" style="top:12.9px;height:30.9px"><span class="n" style="top:8.3px">965</span><span class="i" style="top:2.4px">UNIVERSITY OF<br>JINAN</span><span class="c" style="top:2.4px">CHINA<br>MAINLAND</span><span class="d d1" style="top:8.3px">1,393</span><span class="d d2" style="top:8.3px">21,034</span><span class="d d3" style="top:8.3px">15.10</span></div>
<div class="r" style="top:43.8px;height:30.2px"><span class="n" style="top:8.0px">966</span><span class="i" style="top:2.1px">CANKAYA<br>UNIVERSITY</span><span class="c" style="top:8.0px">TURKIYE</span><span class="d d1" style="top:8.0px">710</span><span class="d d2" style="top:8.0px">20,956</span><span class="d d3" style="top:8.0px">29.52</span></div>
<div class="r" style="top:74.0px;height:42.9px"><span class="n" style="top:14.3px">967</span><span class="i" style="top:2.6px">ZHEJIANG<br>NORMAL<br>UNIVERSITY</span><span class="c" style="top:8.4px">CHINA<br>MAINLAND</span><span class="d d1" style="top:14.3px">1,620</span><span class="d d2" style="top:14.3px">20,916</span><span class="d d3" style="top:14.3px">12.91</span></div>
<div class="r" style="top:116.9px;height:66.0px"><span class="n" style="top:25.8px">968</span><span class="i" style="top:2.5px">UNIVERSITE DE<br>TECHNOLOGIE<br>DE BELFORT-<br>MONTBELIARD<br>(UTBM)</span><span class="c" style="top:25.8px">FRANCE</span><span class="d d1" style="top:25.8px">1,060</span><span class="d d2" style="top:25.8px">20,901</span><span class="d d3" style="top:25.8px">19.72</span></div>
<div class="r" style="top:182.9px;height:42.1px"><span class="n" style="top:13.9px">969</span><span class="i" style="top:2.2px">FONDAZIONE<br>BRUNO<br>KESSLER</span><span class="c" style="top:13.9px">ITALY</span><span class="d d1" style="top:13.9px">867</span><span class="d d2" style="top:13.9px">20,898</span><span class="d d3" style="top:13.9px">24.10</span></div>
<div class="r" style="top:225.0px;height:43.1px"><span class="n" style="top:14.4px">970</span><span class="i" style="top:2.7px">HEINRICH HEINE<br>UNIVERSITY<br>DUSSELDORF</span><span class="c" style="top:8.6px">GERMANY (FED<br>REP GER)</span><span class="d d1" style="top:14.4px">978</span><span class="d d2" style="top:14.4px">20,818</span><span class="d d3" style="top:14.4px">21.29</span></div>
<div class="r" style="top:268.1px;height:42.9px"><span class="n" style="top:14.3px">971</span><span class="i" style="top:2.6px">HARVARD<br>MEDICAL<br>SCHOOL</span><span class="c" style="top:14.3px">USA</span><span class="d d1" style="top:14.3px">676</span><span class="d d2" style="top:14.3px">20,807</span><span class="d d3" style="top:14.3px">30.78</span></div>
</div>
<div class="abs" style="left:844px;top:474px;width:17px;height:287px;background:#f1f1f1"></div>
<svg class="abs" style="left:848px;top:480px" width="9" height="6" viewBox="0 0 9 6"><path d="M0 6h9L4.5 0z" fill="#505050"/></svg>
<svg class="abs" style="left:848px;top:748.5px" width="9" height="5" viewBox="0 0 9 6"><path d="M0 0h9L4.5 6z" fill="#505050"/></svg>
<div class="abs" style="left:846.5px;top:720px;width:12.5px;height:16.5px;background:#c1c1c1"></div>
<div class="abs" style="left:222px;top:761px;width:639px;height:16px;background:#f1f1f1"></div>
<div class="abs" style="left:844px;top:761px;width:17px;height:16px;background:#dcdcdc"></div>
<div class="abs" style="left:239px;top:763px;width:500px;height:12px;background:#c1c1c1"></div>
<svg class="abs" style="left:228px;top:764px" width="6" height="9" viewBox="0 0 6 9"><path d="M6 0v9L0 4.5z" fill="#a3a3a3"/></svg>
<svg class="abs" style="left:833px;top:764px" width="6" height="9" viewBox="0 0 6 9"><path d="M0 0v9L6 4.5z" fill="#505050"/></svg>
<div class="abs red" style="left:227.3px;top:481.2px;width:623.7px;height:35.6px"></div>
<!--MAINEND-->
</body>
</html>
